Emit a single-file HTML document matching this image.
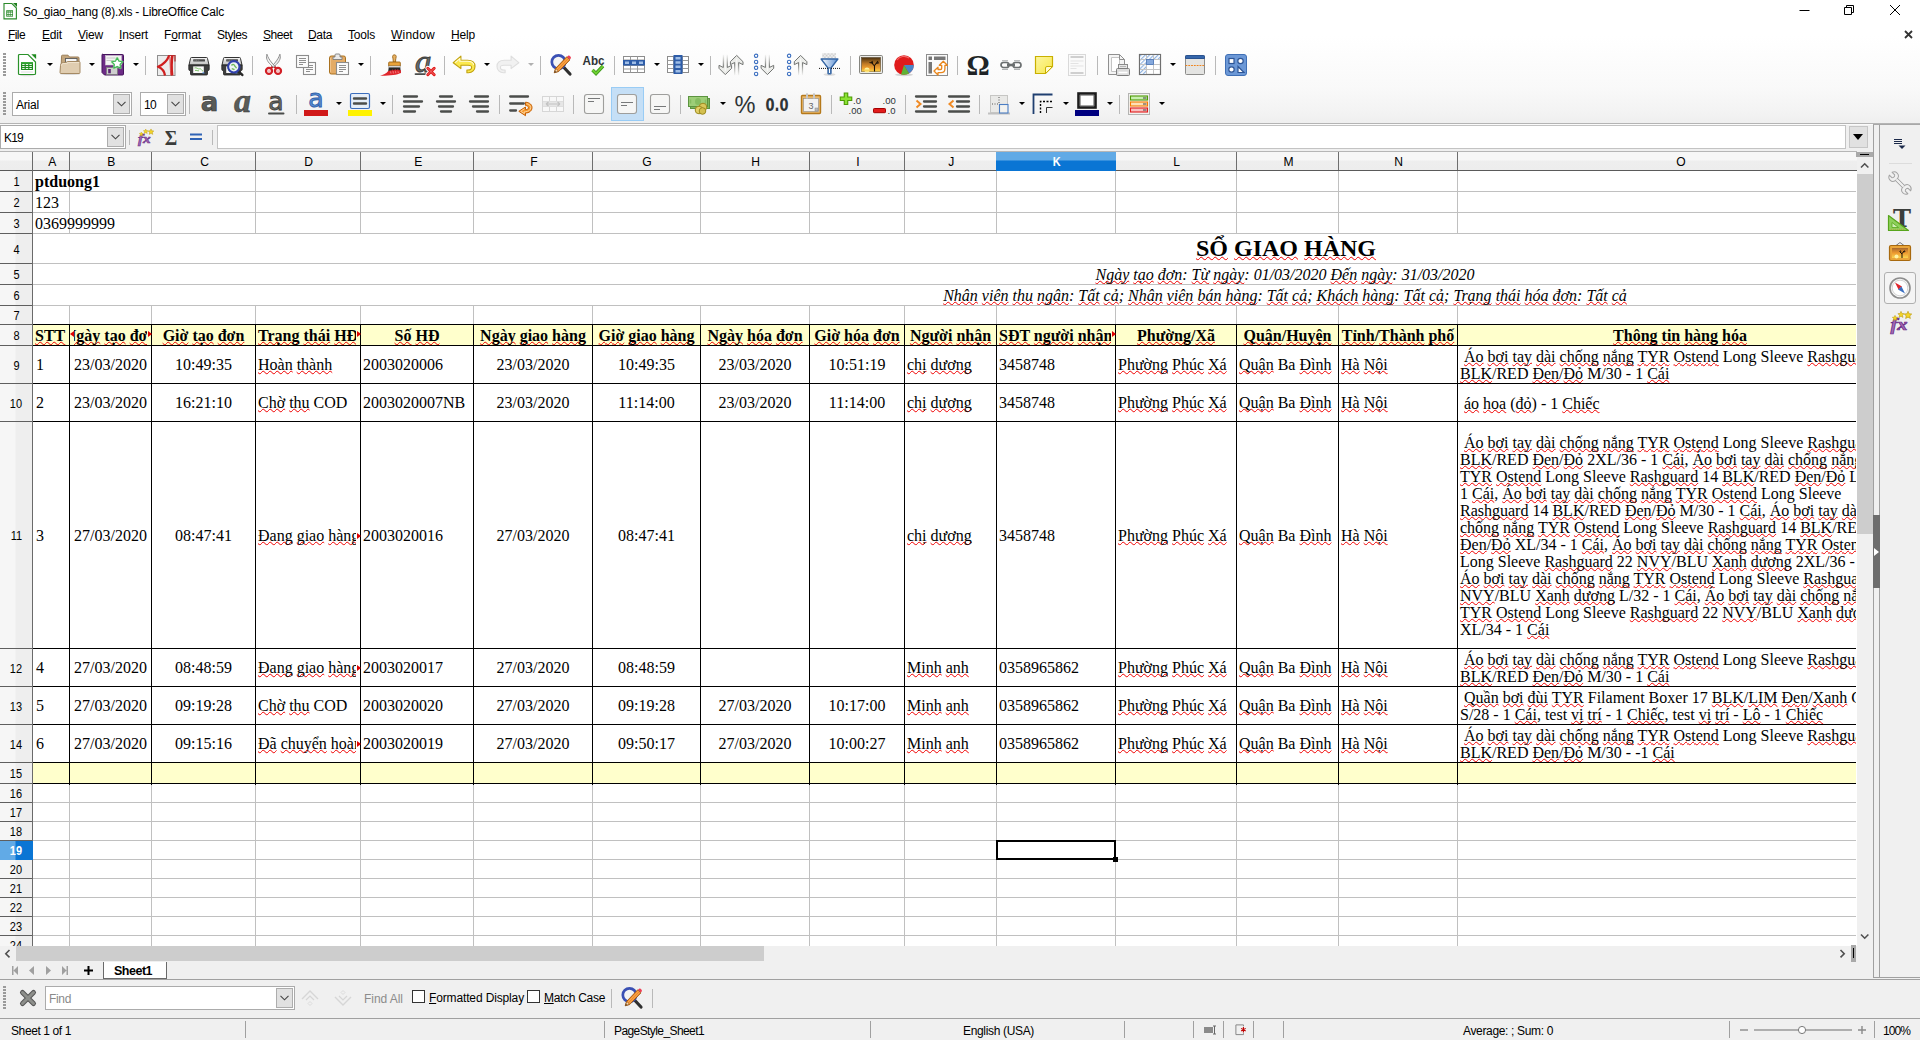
<!DOCTYPE html>
<html lang="vi"><head><meta charset="utf-8"><title>So_giao_hang (8).xls - LibreOffice Calc</title>
<style>
html,body{margin:0;padding:0;}
body{width:1920px;height:1040px;overflow:hidden;background:#f0f0f0;position:relative;font-family:"Liberation Sans", sans-serif;font-size:12px;color:#000;}
div,span{box-sizing:border-box;}
.abs{position:absolute;}
.t{position:absolute;white-space:pre;line-height:16px;height:16px;}
.ic{position:absolute;width:24px;height:24px;overflow:visible;}
.dd{position:absolute;width:0;height:0;border-left:3px solid transparent;border-right:3px solid transparent;border-top:3.5px solid #000;}
.sep{position:absolute;width:1px;height:19px;background:#b9b9b9;}
.cell{position:absolute;font-family:"Liberation Serif", serif;font-size:16px;white-space:pre;overflow:hidden;display:flex;align-items:center;line-height:17px;}
.cell.c{justify-content:center;}
.cell.b{font-weight:bold;}
.cell.i{font-style:italic;}
.sp{text-decoration:underline wavy #f00000;text-decoration-thickness:1px;text-underline-offset:0.2px;text-decoration-skip-ink:none;}
.hl{position:absolute;background:#000;}
.gl{position:absolute;background:#c0c0c0;}
.ch{position:absolute;top:152px;height:18px;text-align:center;font-size:13px;line-height:20px;color:#000;padding-left:2px;}
.rh{position:absolute;left:0;width:32px;text-align:center;font-size:12.5px;color:#000;}
.st{position:absolute;top:1021px;height:18px;line-height:18px;white-space:pre;}
.ssep{position:absolute;top:1021px;width:1px;height:17px;background:#a0a0a0;}
.tri{position:absolute;width:0;height:0;border-top:3px solid transparent;border-bottom:3px solid transparent;}
</style></head><body>
<div class="abs" style="left:0;top:0;width:1920px;height:24px;background:#fff"></div>
<svg class="ic" style="left:1px;top:1.5px;width:18px;height:18px" viewBox="0 0 24 24"><path d="M4 2h10.500l6 6v14.500h-16.500z" fill="#fff" stroke="#2b8a2b" stroke-width="1.500"/><path d="M16 1.300h5.300v5.300z" fill="#1e7e1e"/><rect x="7" y="11" width="9" height="8.500" fill="#2b8a2b"/><path d="M8.300 12.500h1.800v1.400h-1.800zM10.800 12.500h1.800v1.400h-1.800zM13.300 12.500h1.800v1.400h-1.800zM8.300 14.700h1.800v1.400h-1.800zM10.800 14.700h1.800v1.400h-1.800zM13.300 14.700h1.800v1.400h-1.800zM8.300 16.900h1.800v1.400h-1.800zM10.800 16.900h1.800v1.400h-1.800zM13.300 16.900h1.800v1.400h-1.800z" fill="#fff"/></svg><span class="t" style="left:23px;top:4px;font-size:12px;color:#000;letter-spacing:-0.211px;">So_giao_hang (8).xls - LibreOffice Calc</span>
<svg class="abs" style="left:1780px;top:0" width="140" height="24" viewBox="0 0 140 24" fill="none" stroke="#000" stroke-width="1"><path d="M19.5 10.5h10"/><path d="M64.5 7.5h7v7h-7z M66.5 7.5v-2h7v7h-2"/><path d="M110 5l10 10M120 5l-10 10"/></svg>
<div class="abs" style="left:0;top:24px;width:1920px;height:99px;background:linear-gradient(#ffffff 0px,#ffffff 12px,#fcfcfc 40px,#f9f9f9 64px,#f3f3f3 88px,#efefef 99px)"></div>
<div class="abs" style="left:0;top:123px;width:1920px;height:1px;background:#b4b4b4"></div>
<div class="abs" style="left:0;top:124px;width:1920px;height:1px;background:#fbfbfb"></div>
<span class="t" style="left:8px;top:27px;font-size:12px;color:#000;letter-spacing:-0.586px;"><u>F</u>ile</span>
<span class="t" style="left:42px;top:27px;font-size:12px;color:#000;letter-spacing:-0.172px;"><u>E</u>dit</span>
<span class="t" style="left:78px;top:27px;font-size:12px;color:#000;letter-spacing:-0.199px;"><u>V</u>iew</span>
<span class="t" style="left:119px;top:27px;font-size:12px;color:#000;letter-spacing:-0.169px;"><u>I</u>nsert</span>
<span class="t" style="left:164px;top:27px;font-size:12px;color:#000;letter-spacing:-0.169px;">F<u>o</u>rmat</span>
<span class="t" style="left:217px;top:27px;font-size:12px;color:#000;letter-spacing:-0.448px;">Sty<u>l</u>es</span>
<span class="t" style="left:263px;top:27px;font-size:12px;color:#000;letter-spacing:-0.472px;"><u>S</u>heet</span>
<span class="t" style="left:308px;top:27px;font-size:12px;color:#000;letter-spacing:-0.340px;"><u>D</u>ata</span>
<span class="t" style="left:348px;top:27px;font-size:12px;color:#000;letter-spacing:-0.203px;"><u>T</u>ools</span>
<span class="t" style="left:391px;top:27px;font-size:12px;color:#000;letter-spacing:0.219px;"><u>W</u>indow</span>
<span class="t" style="left:451px;top:27px;font-size:12px;color:#000;letter-spacing:-0.172px;"><u>H</u>elp</span>
<svg class="abs" style="left:1902.5px;top:28.5px" width="12" height="12" viewBox="0 0 12 12"><path d="M2 2l7 7M9 2l-7 7" stroke="#333" stroke-width="1.8" fill="none"/></svg>
<div class="abs" style="left:3px;top:53px;width:3px;height:23px;background:repeating-linear-gradient(#9a9a9a 0,#9a9a9a 2px,transparent 2px,transparent 3px)"></div>
<div class="abs" style="left:3px;top:92px;width:3px;height:23px;background:repeating-linear-gradient(#9a9a9a 0,#9a9a9a 2px,transparent 2px,transparent 3px)"></div>
<div class="abs" style="left:3px;top:986px;width:3px;height:23px;background:repeating-linear-gradient(#9a9a9a 0,#9a9a9a 2px,transparent 2px,transparent 3px)"></div>
<svg class="ic" style="left:14px;top:53px;" viewBox="0 0 24 24"><ellipse cx="13" cy="22.300" rx="7" ry="1" fill="#000" opacity=".12"/><path d="M5.500 1.500h8.500l7.500 7.500v11.500a1 1 0 0 1-1 1h-15a1 1 0 0 1-1-1v-18a1 1 0 0 1 1-1z" fill="#fff" stroke="#2a922a" stroke-width="1.200"/><path d="M17.300 1.200h4.800v4.800z" fill="#1e8a1e"/><rect x="7" y="9" width="12" height="8" rx=".6" fill="#1f8c1f"/><path d="M7 9h12v1.600h-12z" fill="#3cab3c"/><path d="M8.200 11h2.400v1h-2.400zM11.800 11h2.400v1h-2.400zM15.400 11h2.400v1h-2.400zM8.200 13h2.400v1h-2.400zM11.800 13h2.400v1h-2.400zM15.400 13h2.400v1h-2.400zM8.200 15h2.400v1h-2.400zM11.800 15h2.400v1h-2.400zM15.400 15h2.400v1h-2.400z" fill="#e8f6e8"/><path d="M7 19h12" stroke="#d5d5d5" stroke-width=".8"/></svg>
<div class="dd" style="left:46.5px;top:62.5px;border-top-color:#000"></div>
<svg class="ic" style="left:58px;top:53px;" viewBox="0 0 24 24"><ellipse cx="12" cy="21" rx="10" ry="1" fill="#000" opacity=".12"/><path d="M3.500 3.200a1 1 0 0 1 1-1h5.500l1.500 1.800h8.500a1 1 0 0 1 1 1v14h-18z" fill="#c2a57c" stroke="#9a7d56"/><rect x="7.500" y="5.500" width="11.500" height="6" fill="#f6f6f6" stroke="#5a5a5a" stroke-width=".9"/><path d="M8.500 8.500h9.500v2.500h-9.500z" fill="#d0d0d0"/><path d="M2.500 12.500c0-2 1.500-3 3-3h2.500l1.500-1h11.500a1 1 0 0 1 1 1v10a1 1 0 0 1-1 1h-18a1 1 0 0 1-1-1z" fill="#e0cdb0" stroke="#a58a64"/><path d="M3.500 12.500c0-1.200 1-2 2.200-2h3l1.500-1h11" fill="none" stroke="#f0e4cf" stroke-width=".9"/></svg>
<div class="dd" style="left:88.5px;top:62.5px;border-top-color:#000"></div>
<svg class="ic" style="left:101px;top:53px;" viewBox="0 0 24 24"><path d="M2 1.500h19.500a1 1 0 0 1 1 1v18.500a1 1 0 0 1-1 1h-18l-2.500-2.500v-17.500a1 1 0 0 1 1-1z" fill="#6c2b86" stroke="#45145c"/><rect x="4.500" y="2.500" width="16" height="9.500" fill="#f3f3f3" stroke="#d0d0d0" stroke-width=".5"/><path d="M5.500 5h9M5.500 7.500h7" stroke="#c4c4c4" stroke-width=".9"/><rect x="5.500" y="14.500" width="11" height="7" fill="#cfcfcf" stroke="#7a7a7a" stroke-width=".8"/><rect x="7.200" y="16" width="2.600" height="4.300" fill="#5a2273"/><path d="M16.200 5l1.700 3.200 3.600.600-2.500 2.600.5 3.600-3.300-1.600-3.300 1.600.5-3.600-2.500-2.600 3.600-.600z" fill="#fff" stroke="#8fe08a" stroke-width="2.300" stroke-linejoin="round" opacity=".8"/><path d="M16.200 5l1.700 3.200 3.600.600-2.500 2.600.5 3.600-3.300-1.600-3.300 1.600.5-3.600-2.500-2.600 3.600-.600z" fill="#fff" stroke="#3fb558" stroke-width="1.100" stroke-linejoin="round"/></svg>
<div class="dd" style="left:132.5px;top:62.5px;border-top-color:#000"></div>
<div class="sep" style="left:145px;top:56px"></div>
<svg class="ic" style="left:154px;top:53px;" viewBox="0 0 24 24"><rect x="3.500" y="2.500" width="17.500" height="20" fill="#ededed" stroke="#8f8f8f"/><path d="M14 2.500h7v6" fill="none" stroke="#b03030" stroke-width="1.200"/><path d="M15 2.800c-1.500 4-5.500 8.500-11 11 4.500 1.800 6.500 5 7 8.700" fill="none" stroke="#cf1f1f" stroke-width="2.300" stroke-linejoin="round"/><path d="M18.300 2.800c-.8 5-.9 13-.2 19.700" fill="none" stroke="#cf1f1f" stroke-width="2.600"/><path d="M15.800 4c.3 5 .4 12 1 18" fill="none" stroke="#d84a4a" stroke-width=".9"/></svg>
<svg class="ic" style="left:187px;top:53px;" viewBox="0 0 24 24"><defs><linearGradient id="pg" x1="0" y1="0" x2="0" y2="1"><stop offset="0" stop-color="#f6f6f6"/><stop offset="1" stop-color="#bdbdbd"/></linearGradient></defs><path d="M4.500 4.500h15a1 1 0 0 1 1 1l1.500 6.500h-20l1.500-6.500a1 1 0 0 1 1-1z" fill="url(#pg)" stroke="#333" stroke-width="1"/><rect x="6.200" y="6.300" width="11.800" height="2.100" rx=".5" fill="#4a4a4a"/><path d="M7.500 7.300h5" stroke="#9a9a9a" stroke-width=".7" stroke-dasharray="1 .6"/><path d="M1.800 12h20.400v4.500a1 1 0 0 1-1 1h-.7v3.500a1 1 0 0 1-1 1h-15a1 1 0 0 1-1-1v-3.500h-.7a1 1 0 0 1-1-1z" fill="#3e3e3e" stroke="#222" stroke-width=".8"/><rect x="6.200" y="13.400" width="10.600" height="6.600" fill="#fafafa"/><path d="M7.500 15c2-1 3.500 1.500 5 .8s2 1.800 3.500 2.400M8 17.500c1.500-.6 2.500.6 4 .3" fill="none" stroke="#7fc46a" stroke-width="1"/><rect x="15.400" y="19.400" width="2" height="1" fill="#4a90e2"/></svg>
<svg class="ic" style="left:220px;top:53px;" viewBox="0 0 24 24"><defs><linearGradient id="pg" x1="0" y1="0" x2="0" y2="1"><stop offset="0" stop-color="#f6f6f6"/><stop offset="1" stop-color="#bdbdbd"/></linearGradient></defs><path d="M4.500 4.500h15a1 1 0 0 1 1 1l1.500 6.500h-20l1.500-6.500a1 1 0 0 1 1-1z" fill="url(#pg)" stroke="#333" stroke-width="1"/><rect x="6.200" y="6.300" width="11.800" height="2.100" rx=".5" fill="#4a4a4a"/><path d="M7.500 7.300h5" stroke="#9a9a9a" stroke-width=".7" stroke-dasharray="1 .6"/><path d="M1.800 12h20.400v4.500a1 1 0 0 1-1 1h-.7v3.500a1 1 0 0 1-1 1h-15a1 1 0 0 1-1-1v-3.500h-.7a1 1 0 0 1-1-1z" fill="#3e3e3e" stroke="#222" stroke-width=".8"/><rect x="6.200" y="13.400" width="10.600" height="6.600" fill="#fafafa"/><path d="M7.500 15c2-1 3.500 1.500 5 .8s2 1.800 3.500 2.400M8 17.500c1.500-.6 2.500.6 4 .3" fill="none" stroke="#7fc46a" stroke-width="1"/><rect x="15.400" y="19.400" width="2" height="1" fill="#4a90e2"/><path d="M18.700 18.700l3.600 3.200" stroke="#2a2a2a" stroke-width="2.600" stroke-linecap="round"/><circle cx="13.800" cy="13.800" r="5.700" fill="#eef3f6" stroke="#3040ac" stroke-width="2.100"/><path d="M11.500 12.500c1-1.500 2.500-1.500 3 0s1.800 1.200 1.800 2.800M11.800 15.500c1 .8 2 .5 2.600 1.200" fill="none" stroke="#6fb85a" stroke-width="1.400"/></svg>
<div class="sep" style="left:252px;top:56px"></div>
<svg class="ic" style="left:261px;top:53px;" viewBox="0 0 24 24"><path d="M10 15.300l2.500-2.600 2.500 2.600" fill="none" stroke="#c81a20" stroke-width="2"/><circle cx="8" cy="17.900" r="3" fill="#fff" stroke="#d21f26" stroke-width="2.300"/><circle cx="17" cy="17.900" r="3" fill="#fff" stroke="#d21f26" stroke-width="2.300"/><circle cx="8" cy="17.900" r="1" fill="#fff" stroke="#e58a8a" stroke-width=".6"/><circle cx="17" cy="17.900" r="1" fill="#fff" stroke="#e58a8a" stroke-width=".6"/><path d="M18.900 1.200C20 4.500 19 8 15.300 11.500L12.600 14.200L11.200 13L13.800 10C16.300 7 17.800 4.500 18.900 1.200Z" fill="#ededed" stroke="#858585" stroke-width=".9" stroke-linejoin="round"/><path d="M5.900 1.200C4.800 4.500 5.800 8 9.500 11.500L12.200 14.200L13.600 13L11 10C8.500 7 7 4.500 5.900 1.200Z" fill="#f4f4f4" stroke="#858585" stroke-width=".9" stroke-linejoin="round"/></svg>
<svg class="ic" style="left:294px;top:53px;" viewBox="0 0 24 24"><rect x="9.500" y="9.500" width="12" height="12" fill="#fbfbfb" stroke="#8c8c8c" stroke-width="1.100"/><path d="M12 12.500h7M12 14.500h7M12 16.500h7M12 18.500h4" stroke="#8e8e8e" stroke-width="1.100"/><rect x="2.500" y="2.500" width="12" height="12" fill="#fbfbfb" stroke="#8c8c8c" stroke-width="1.100"/><path d="M5 5.500h7M5 7.500h7M5 9.500h7M5 11.500h4" stroke="#8e8e8e" stroke-width="1.100"/></svg>
<svg class="ic" style="left:326px;top:53px;" viewBox="0 0 24 24"><rect x="3.500" y="3" width="16" height="18" rx="1.800" fill="#e3ab66" stroke="#a9711f"/><path d="M4.500 5v14" stroke="#efc48d" stroke-width="1"/><path d="M7 6.500v-2.500h2v-2a1 1 0 0 1 1-1h3a1 1 0 0 1 1 1v2h2v2.500z" fill="#e9e9e9" stroke="#7d7d7d" stroke-width=".9"/><rect x="10.500" y="9.500" width="12" height="12" fill="#fbfbfb" stroke="#8c8c8c" stroke-width="1.100"/><path d="M13 12.500h7M13 14.500h7M13 16.500h7M13 18.500h4" stroke="#8e8e8e" stroke-width="1.100"/></svg>
<div class="dd" style="left:357.5px;top:62.5px;border-top-color:#000"></div>
<div class="sep" style="left:370px;top:56px"></div>
<svg class="ic" style="left:379px;top:53px;" viewBox="0 0 24 24"><path d="M13.600 3.500c0-2.200 3.600-2.200 3.600 0 0 1.500-.6 2-.6 3.500v2h-2.400v-2c0-1.500-.6-2-.6-3.500z" fill="#e8b264" stroke="#9a6417" stroke-width=".9"/><path d="M10.500 9h10a.8.800 0 0 1 .8.800v3.200h-11.600v-3.200a.8.800 0 0 1 .8-.800z" fill="#e9a23a" stroke="#9a6417" stroke-width=".9"/><path d="M9.700 13h11.600v1.400h-11.600z" fill="#f2f2f2" stroke="#888" stroke-width=".5"/><path d="M9.700 14.400h11.600l.5 5.400h-12.800z" fill="#262626"/><path d="M9.200 18c1 .5 1.500-1.500 2.500-.5s1.500-2 2.500-.5 1.800-1.800 2.600-.3 1.800-1.500 2.600 0 1.500-.5 2.400.6l.2 2.700c-4 1.800-12 3-21 2.800 3-1.200 6.500-2.300 8.200-4.800z" fill="#e0262c"/><path d="M11.500 18.500l.5 2M14 18l.4 2.500M16.500 18.200l.3 2M19 18.300l.3 1.800" stroke="#f7a0a0" stroke-width=".7"/></svg>
<svg class="ic" style="left:413px;top:53px;" viewBox="0 0 24 24"><text x="2" y="19" font-family="Liberation Serif, serif" font-style="italic" font-size="31" fill="#6a6c68" stroke="#3e403e" stroke-width=".9" textLength="16.500" lengthAdjust="spacingAndGlyphs">a</text><path d="M2.500 21.100h10.500" stroke="#4a4c4a" stroke-width="1.800" stroke-linecap="round"/><path d="M14.800 15.300l6.400 6.400M21.200 15.300l-6.400 6.400" stroke="#fff" stroke-width="4.800" stroke-linecap="round"/><path d="M14.800 15.300l6.400 6.400M21.200 15.300l-6.400 6.400" stroke="#e01b1b" stroke-width="3" stroke-linecap="round"/><path d="M14.800 15.300l6.400 6.400M21.200 15.300l-6.400 6.400" stroke="#f58080" stroke-width=".8" stroke-linecap="round"/></svg>
<div class="sep" style="left:444px;top:56px"></div>
<svg class="ic" style="left:452px;top:53px;" viewBox="0 0 24 24"><path d="M1.200 9.700L8.900 3.100V7.200H15.500C20.300 7.200 23 9.800 23 13.400C23 17 20.300 19.700 16.500 19.700H14.900V17H16C18.300 17 19.600 15.600 19.600 14.200C19.600 12.900 18.300 12.200 16 12.200H8.900V15.600Z" fill="#fbe94e" stroke="#c0a10e" stroke-width="1.100" stroke-linejoin="round"/><path d="M3.200 9.700l4.600-4v2.600h8c3 0 5.300 1.200 6 3.600" fill="none" stroke="#fffbd8" stroke-width="1.100"/></svg>
<div class="dd" style="left:483.5px;top:62.5px;border-top-color:#000"></div>
<svg class="ic" style="left:496px;top:53px;" viewBox="0 0 24 24"><g transform="translate(24 0) scale(-1 1)"><path d="M1.200 9.700L8.900 3.100V7.200H15.500C20.300 7.200 23 9.800 23 13.400C23 17 20.300 19.700 16.500 19.700H14.900V17H16C18.300 17 19.600 15.600 19.600 14.200C19.600 12.900 18.300 12.200 16 12.200H8.900V15.600Z" fill="#f1f1f1" stroke="#dedede" stroke-width="1.100" stroke-linejoin="round"/></g></svg>
<div class="dd" style="left:527.5px;top:62.5px;border-top-color:#b0b0b0"></div>
<div class="sep" style="left:540px;top:56px"></div>
<svg class="ic" style="left:549px;top:53px;" viewBox="0 0 24 24"><path d="M14 13.500l7 7.500" stroke="#2f2f2f" stroke-width="3.200" stroke-linecap="round"/><circle cx="9.500" cy="9" r="6.700" fill="#f3f3f3" fill-opacity=".9" stroke="#3a50b4" stroke-width="2.700"/><path d="M5.200 19.800l1.300-4.300 11.200-11.700 3.200 3.100-11.300 11.700z" fill="#f28b24" stroke="#8f4a08" stroke-width=".8"/><path d="M7.500 16.500l11-11.500M8.800 17.800l11-11.500" stroke="#f9b870" stroke-width=".7"/><path d="M5.500 19.500l1.300-4 2.700 2.700z" fill="#f3d9b0" stroke="#8f4a08" stroke-width=".6"/><path d="M18 3.800l1.200-1.100c.9-.8 3.400 1.600 2.600 2.600l-1.100 1.200z" fill="#ee3e54"/><path d="M5.500 19.500l.5-1.500 1 1z" fill="#222"/></svg>
<svg class="ic" style="left:582px;top:53px;" viewBox="0 0 24 24"><text x="0.500" y="11.500" font-family="Liberation Sans, sans-serif" font-weight="bold" font-size="12.500" fill="#2e3436" textLength="22" lengthAdjust="spacingAndGlyphs">Abc</text><path d="M10.500 17l3.500 3.500 7-7.500" fill="none" stroke="#3f9a1c" stroke-width="3.400"/><path d="M10.500 17l3.500 3.500 7-7.500" fill="none" stroke="#6fd032" stroke-width="1.800"/></svg>
<div class="sep" style="left:614px;top:56px"></div>
<svg class="ic" style="left:622px;top:53px;" viewBox="0 0 24 24"><rect x="1.500" y="3.500" width="21" height="16" fill="#fff" stroke="#8d8d8d"/><path d="M1.500 7h21M1.500 12.500h21M1.500 16h21M8.500 3.500v16M15.500 3.500v16" stroke="#9a9a9a"/><rect x="1" y="7" width="22" height="5.500" fill="#2d5ca8"/><path d="M3 8.500h4v2.500h-4zM10 8.500h4v2.500h-4zM17 8.500h4v2.500h-4z" fill="#9fbde6"/></svg>
<div class="dd" style="left:653.5px;top:62.5px;border-top-color:#000"></div>
<svg class="ic" style="left:666px;top:53px;" viewBox="0 0 24 24"><rect x="1.500" y="3.500" width="21" height="16" fill="#fff" stroke="#8d8d8d"/><path d="M1.500 7.500h21M1.500 11.500h21M1.500 15.500h21M7.500 3.500v16M16.500 3.500v16" stroke="#9a9a9a"/><rect x="7.500" y="2" width="9" height="19" fill="#2d5ca8"/><path d="M9.500 4h5v2.500h-5zM9.500 8.300h5v2.500h-5zM9.500 12.600h5v2.500h-5zM9.500 16.900h5v2.500h-5z" fill="#9fbde6"/></svg>
<div class="dd" style="left:697.5px;top:62.5px;border-top-color:#000"></div>
<div class="sep" style="left:710px;top:56px"></div>
<svg class="ic" style="left:719px;top:53px;" viewBox="0 0 24 24"><defs><linearGradient id="agf" gradientUnits="userSpaceOnUse" x1="0" y1="1" x2="0" y2="12"><stop offset="0" stop-color="#eeeeec" stop-opacity="0"/><stop offset="1" stop-color="#ecedea"/></linearGradient><linearGradient id="ags" gradientUnits="userSpaceOnUse" x1="0" y1="1" x2="0" y2="13"><stop offset="0" stop-color="#888a85" stop-opacity="0"/><stop offset="1" stop-color="#707270"/></linearGradient></defs><g><path d="M4.3 1.500V14.500L0.0 12.300V15.300L6.3 21.600L12.6 15.300V12.300L8.3 14.500V1.500Z" fill="url(#agf)"/><path d="M4.3 1.500V14.500L0.0 12.300V15.300L6.3 21.600L12.6 15.300V12.300L8.3 14.500V1.500" fill="none" stroke="url(#ags)" stroke-width="1" stroke-linejoin="round"/><path d="M6.3 3V18" stroke="#fff" stroke-opacity=".7" stroke-width="1"/></g><g transform="rotate(180 17.7 12)"><path d="M15.7 1.500V14.500L11.399999999999999 12.300V15.300L17.7 21.600L24.0 15.300V12.300L19.7 14.500V1.500Z" fill="url(#agf)"/><path d="M15.7 1.500V14.500L11.399999999999999 12.300V15.300L17.7 21.600L24.0 15.300V12.300L19.7 14.500V1.500" fill="none" stroke="url(#ags)" stroke-width="1" stroke-linejoin="round"/><path d="M17.7 3V18" stroke="#fff" stroke-opacity=".7" stroke-width="1"/></g></svg>
<svg class="ic" style="left:752px;top:53px;" viewBox="0 0 24 24"><defs><linearGradient id="agf" gradientUnits="userSpaceOnUse" x1="0" y1="1" x2="0" y2="12"><stop offset="0" stop-color="#eeeeec" stop-opacity="0"/><stop offset="1" stop-color="#ecedea"/></linearGradient><linearGradient id="ags" gradientUnits="userSpaceOnUse" x1="0" y1="1" x2="0" y2="13"><stop offset="0" stop-color="#888a85" stop-opacity="0"/><stop offset="1" stop-color="#707270"/></linearGradient></defs><circle cx="4.100" cy="2.8" r="1.700" fill="#fff" stroke="#3b6fc0" stroke-width="1.100"/><circle cx="4.100" cy="8.9" r="1.700" fill="#fff" stroke="#3b6fc0" stroke-width="1.100"/><circle cx="4.100" cy="14.8" r="1.700" fill="#fff" stroke="#3b6fc0" stroke-width="1.100"/><circle cx="4.100" cy="20.9" r="1.700" fill="#fff" stroke="#3b6fc0" stroke-width="1.100"/><g><path d="M13.4 1.500V14.500L9.100000000000001 12.300V15.300L15.4 21.600L21.7 15.300V12.300L17.4 14.500V1.500Z" fill="url(#agf)"/><path d="M13.4 1.500V14.500L9.100000000000001 12.300V15.300L15.4 21.600L21.7 15.300V12.300L17.4 14.500V1.500" fill="none" stroke="url(#ags)" stroke-width="1" stroke-linejoin="round"/><path d="M15.4 3V18" stroke="#fff" stroke-opacity=".7" stroke-width="1"/></g></svg>
<svg class="ic" style="left:785px;top:53px;" viewBox="0 0 24 24"><defs><linearGradient id="agf" gradientUnits="userSpaceOnUse" x1="0" y1="1" x2="0" y2="12"><stop offset="0" stop-color="#eeeeec" stop-opacity="0"/><stop offset="1" stop-color="#ecedea"/></linearGradient><linearGradient id="ags" gradientUnits="userSpaceOnUse" x1="0" y1="1" x2="0" y2="13"><stop offset="0" stop-color="#888a85" stop-opacity="0"/><stop offset="1" stop-color="#707270"/></linearGradient></defs><circle cx="4.100" cy="2.8" r="1.700" fill="#fff" stroke="#3b6fc0" stroke-width="1.100"/><circle cx="4.100" cy="8.9" r="1.700" fill="#fff" stroke="#3b6fc0" stroke-width="1.100"/><circle cx="4.100" cy="14.8" r="1.700" fill="#fff" stroke="#3b6fc0" stroke-width="1.100"/><circle cx="4.100" cy="20.9" r="1.700" fill="#fff" stroke="#3b6fc0" stroke-width="1.100"/><g transform="rotate(180 15.6 12)"><path d="M13.6 1.500V14.500L9.3 12.300V15.300L15.6 21.600L21.9 15.300V12.300L17.6 14.500V1.500Z" fill="url(#agf)"/><path d="M13.6 1.500V14.500L9.3 12.300V15.300L15.6 21.600L21.9 15.300V12.300L17.6 14.500V1.500" fill="none" stroke="url(#ags)" stroke-width="1" stroke-linejoin="round"/><path d="M15.6 3V18" stroke="#fff" stroke-opacity=".7" stroke-width="1"/></g></svg>
<svg class="ic" style="left:817px;top:53px;" viewBox="0 0 24 24"><defs><linearGradient id="fg" x1="0" y1="0" x2="1" y2="0"><stop offset="0" stop-color="#fff"/><stop offset="1" stop-color="#5b8fd2"/></linearGradient><pattern id="ck" width="1.400" height="1.400" patternUnits="userSpaceOnUse"><rect width=".7" height=".7" fill="#c4c4c4"/><rect x=".7" y=".7" width=".7" height=".7" fill="#c4c4c4"/></pattern></defs><rect x="5.200" y="0.200" width="13.800" height="5.400" fill="url(#ck)"/><ellipse cx="12.500" cy="21.500" rx="6" ry="1.300" fill="#000" opacity=".12"/><path d="M4.100 6h16.800l-6.900 9v5.200a.7.700 0 0 1-.7.700h-1.600a.7.700 0 0 1-.7-.7v-5.200z" fill="url(#fg)" stroke="#3465a4" stroke-width="1.300" stroke-linejoin="round"/><path d="M2 15.400h21" stroke="#111" stroke-width="1" stroke-dasharray="1 1"/><path d="M11.400 15h2.200v5.500h-2.200z" fill="#fff" stroke="#3465a4" stroke-width="1"/></svg>
<div class="sep" style="left:850px;top:56px"></div>
<svg class="ic" style="left:859px;top:53px;" viewBox="0 0 24 24"><defs><linearGradient id="ig" x1="0" y1="0" x2="0" y2="1"><stop offset="0" stop-color="#4a3212"/><stop offset=".45" stop-color="#c07a26"/><stop offset=".75" stop-color="#f0a030"/><stop offset="1" stop-color="#f8cc48"/></linearGradient></defs><rect x=".5" y="2.500" width="23" height="18" rx="1.200" fill="#ececea" stroke="#85857f"/><rect x="2.500" y="4.500" width="19" height="14" fill="url(#ig)" stroke="#5a4a30" stroke-width=".6"/><circle cx="8" cy="17" r="2.600" fill="#fff3a0"/><path d="M2.800 16.500h18.400v2h-18.400z" fill="#f6c640" opacity=".7"/><path d="M15.500 18.500v-6.500M15.500 13l-3.500-4M15.500 12.500l3.500-4.500M13.800 11l-.8-3M17 10.500l3-.800M12.800 10l-2.300-.500" stroke="#1c1208" stroke-width="1.100" fill="none"/></svg>
<svg class="ic" style="left:892px;top:53px;" viewBox="0 0 24 24"><ellipse cx="12" cy="21.800" rx="9" ry="1.500" fill="#000" opacity=".15"/><circle cx="12" cy="12" r="9.800" fill="#e01b1b"/><path d="M12 12h9.800a9.800 9.800 0 0 1-4.800 8.400z" fill="#4a86c8"/><path d="M12 12l5 8.400a9.800 9.800 0 0 1-8 1z" fill="#5fb336"/><path d="M5 7a8.500 8.500 0 0 1 12-2" stroke="#f36a6a" stroke-width="1.200" fill="none"/></svg>
<svg class="ic" style="left:925px;top:53px;" viewBox="0 0 24 24"><rect x="1.500" y="1.500" width="21" height="21" fill="#fafafa" stroke="#8d8d8d"/><rect x="3.500" y="3.500" width="3.500" height="3.500" fill="#777"/><rect x="9" y="3.500" width="11.500" height="3.500" fill="#777"/><rect x="3.500" y="9" width="3.500" height="11.500" fill="#777"/><path transform="translate(0 -1)" d="M9 19l4-3.800v2.300h2.500c.8 0 1.200-.4 1.200-1.200v-3h-2.400l4-4 4 4h-2.400v3.500c0 2.500-1.400 3.900-3.900 3.900h-3v2.300z" fill="#fff" stroke="#e9861c" stroke-width="1.300" stroke-linejoin="round"/></svg>
<div class="sep" style="left:957px;top:56px"></div>
<svg class="ic" style="left:966px;top:53px;" viewBox="0 0 24 24"><text x="12" y="21.500" text-anchor="middle" font-family="Liberation Serif, serif" font-weight="bold" font-size="29" fill="#202426">Ω</text></svg>
<svg class="ic" style="left:999px;top:53px;" viewBox="0 0 24 24"><g fill="none" stroke="#6b6f70" stroke-width="1.700"><rect x="2" y="9.500" width="8" height="5" rx="2.500"/><rect x="14" y="9.500" width="8" height="5" rx="2.500"/><path d="M8 12h8" stroke-width="2.600"/></g><path d="M3 7.800h6M15 7.800h6M3 16.300h6M15 16.300h6" stroke="#9ea2a3" stroke-width="1"/></svg>
<svg class="ic" style="left:1032px;top:53px;" viewBox="0 0 24 24"><defs><linearGradient id="ng" x1="0" y1="0" x2="1" y2="1"><stop offset="0" stop-color="#fdf6a0"/><stop offset="1" stop-color="#f6e64c"/></linearGradient></defs><path d="M3.500 3.500h17v10l-7 7h-10z" fill="url(#ng)" stroke="#c9b000" stroke-width="1.200"/><path d="M20.500 13.500l-7 7v-5.500a1.500 1.500 0 0 1 1.500-1.500z" fill="#fffbd0" stroke="#c9b000" stroke-width="1"/></svg>
<svg class="ic" style="left:1065px;top:53px;" viewBox="0 0 24 24"><rect x="3.500" y="1.500" width="17" height="21" fill="#fafafa" stroke="#d9d9d9"/><path d="M5.500 4h13M5.500 20h13" stroke="#cfcfcf" stroke-width="2"/><path d="M5.500 8h13M5.500 10.500h8M5.500 13h13M5.500 15.500h6" stroke="#e3e3e3"/></svg>
<div class="sep" style="left:1097px;top:56px"></div>
<svg class="ic" style="left:1106px;top:53px;" viewBox="0 0 24 24"><path d="M2.500 1.500h11l5 5v15h-16z" fill="#f4f4f4" stroke="#8f8f8f"/><path d="M5.500 4.500h8v14h-8z" fill="#fff" stroke="#c4c4c4"/><path d="M13.500 1.500v5h5" fill="none" stroke="#8f8f8f"/><rect x="12.500" y="11.500" width="9" height="5" fill="#e6e6e6" stroke="#8a8a8a"/><rect x="10.500" y="15.500" width="13" height="7" rx="1" fill="#dcdcdc" stroke="#7d7d7d"/><path d="M12.500 19.500h9" stroke="#fff" stroke-width="1.600"/><path d="M14 13.500h6" stroke="#b4b4b4"/></svg>
<svg class="ic" style="left:1138px;top:53px;" viewBox="0 0 24 24"><defs><pattern id="hz" width="3" height="3" patternUnits="userSpaceOnUse" patternTransform="rotate(-45)"><rect width="3" height="3" fill="#fff"/><rect width="3" height="1.200" fill="#8fb2e0"/></pattern></defs><rect x="1.500" y="1.500" width="21" height="20" fill="#fff" stroke="#6f6f6f" stroke-width="1.200"/><rect x="2" y="2" width="20" height="4.500" fill="url(#hz)"/><rect x="2" y="6.500" width="6.500" height="14.500" fill="url(#hz)"/><path d="M8.500 2v19M15.500 2v19M2 6.500h20M2 11.500h20M2 16.500h20" stroke="#c5c5c5"/><rect x="8.500" y="6.500" width="7" height="5" fill="#86a9dd" stroke="#4a76b8" stroke-width=".8"/></svg>
<div class="dd" style="left:1169.5px;top:62.5px;border-top-color:#000"></div>
<svg class="ic" style="left:1183px;top:53px;" viewBox="0 0 24 24"><rect x="2.500" y="2.500" width="19" height="19" rx="1" fill="#e4e4e2" stroke="#8c8c8a"/><path d="M2.500 3.500a1 1 0 0 1 1-1h17a1 1 0 0 1 1 1v2h-19z" fill="#3566ab" stroke="#2a5390"/><path d="M2.500 12.500h19" stroke="#f0831a" stroke-width="1.200" stroke-dasharray="1.800 1"/></svg>
<div class="sep" style="left:1215px;top:56px"></div>
<svg class="ic" style="left:1224px;top:53px;" viewBox="0 0 24 24"><rect x="1.500" y="1.500" width="21" height="21" rx="2.500" fill="#6c98d6" stroke="#3f6fb5"/><rect x="5" y="5.500" width="5" height="5" fill="#fff" stroke="#2d5596" stroke-width="1.200"/><circle cx="16.500" cy="8" r="2.700" fill="#fff" stroke="#2d5596" stroke-width="1.200"/><circle cx="7.500" cy="16.500" r="2.700" fill="#fff" stroke="#2d5596" stroke-width="1.200"/><path d="M14 19.500v-6l6 6z" fill="#fff" stroke="#2d5596" stroke-width="1.200"/></svg>
<div class="abs" style="left:12px;top:92px;width:120px;height:24px;background:#fff;border:1px solid #ababab"></div>
<div class="abs" style="left:113px;top:94px;width:17px;height:20px;background:#e1e1e1;border:1px solid #adadad"></div>
<svg class="abs" style="left:117px;top:101.0px" width="9" height="6" viewBox="0 0 9 6"><path d="M0.5 0.8l4 4 4-4" stroke="#444" stroke-width="1.1" fill="none"/></svg>
<span class="t" style="left:16px;top:97.0px;font-size:12px;color:#000;letter-spacing:-0.203px;">Arial</span>
<div class="abs" style="left:140px;top:92px;width:46px;height:24px;background:#fff;border:1px solid #ababab"></div>
<div class="abs" style="left:167px;top:94px;width:17px;height:20px;background:#e1e1e1;border:1px solid #adadad"></div>
<svg class="abs" style="left:171px;top:101.0px" width="9" height="6" viewBox="0 0 9 6"><path d="M0.5 0.8l4 4 4-4" stroke="#444" stroke-width="1.1" fill="none"/></svg>
<span class="t" style="left:144px;top:97.0px;font-size:12px;color:#000;letter-spacing:-0.680px;">10</span>
<div class="abs" style="left:611px;top:87px;width:33px;height:34px;background:#c5dff6;border:1px solid #99ccf5"></div>
<div class="sep" style="left:189px;top:95px"></div>
<svg class="ic" style="left:197px;top:92px;" viewBox="0 0 24 24"><text x="12.500" y="19.300" text-anchor="middle" font-family="DejaVu Sans, Liberation Sans, sans-serif" font-weight="bold" font-size="26" fill="#5a5c58" stroke="#2e3030" stroke-width=".6">a</text></svg>
<svg class="ic" style="left:231px;top:92px;" viewBox="0 0 24 24"><text x="3" y="19.500" font-family="Liberation Serif, serif" font-style="italic" font-weight="bold" font-size="34" fill="#5a5c58" stroke="#2e3030" stroke-width=".5" textLength="17" lengthAdjust="spacingAndGlyphs">a</text></svg>
<svg class="ic" style="left:264px;top:92px;" viewBox="0 0 24 24"><text x="12" y="17.700" text-anchor="middle" font-family="DejaVu Sans, Liberation Sans, sans-serif" font-size="25" fill="#6a6c68" stroke="#3a3c3a" stroke-width=".8">a</text><path d="M5 21.500h14.500" stroke="#4a4c4a" stroke-width="2" stroke-linecap="round"/></svg>
<div class="sep" style="left:296px;top:95px"></div>
<svg class="ic" style="left:304px;top:92px;" viewBox="0 0 24 24"><text x="12" y="15.300" text-anchor="middle" font-family="DejaVu Sans, Liberation Sans, sans-serif" font-size="25" fill="#5b8fd6" stroke="#2f5fa8" stroke-width=".9">a</text><rect x="0" y="18" width="24" height="6" fill="#d01818"/></svg>
<div class="dd" style="left:335.5px;top:101.5px;border-top-color:#000"></div>
<svg class="ic" style="left:348px;top:92px;" viewBox="0 0 24 24"><rect x="2.500" y="1.500" width="19" height="15" rx="1.500" fill="#e6eef9" stroke="#3b6dbd" stroke-width="1.200"/><path d="M6 6.500h12M6 11.500h12" stroke="#4b4d4b" stroke-width="2.400" stroke-linecap="round"/><rect x="0" y="18" width="24" height="6" fill="#fff200"/></svg>
<div class="dd" style="left:379.5px;top:101.5px;border-top-color:#000"></div>
<div class="sep" style="left:392px;top:95px"></div>
<svg class="ic" style="left:401px;top:92px;" viewBox="0 0 24 24"><path d="M3 4.5h13" stroke="#4b4d4b" stroke-width="2.300" stroke-linecap="round"/><path d="M3 9.5h18" stroke="#4b4d4b" stroke-width="2.300" stroke-linecap="round"/><path d="M3 14.5h15" stroke="#4b4d4b" stroke-width="2.300" stroke-linecap="round"/><path d="M3 19.5h11" stroke="#4b4d4b" stroke-width="2.300" stroke-linecap="round"/></svg>
<svg class="ic" style="left:434px;top:92px;" viewBox="0 0 24 24"><path d="M6 4.5h12" stroke="#4b4d4b" stroke-width="2.300" stroke-linecap="round"/><path d="M3 9.5h18" stroke="#4b4d4b" stroke-width="2.300" stroke-linecap="round"/><path d="M5 14.5h14" stroke="#4b4d4b" stroke-width="2.300" stroke-linecap="round"/><path d="M7 19.5h10" stroke="#4b4d4b" stroke-width="2.300" stroke-linecap="round"/></svg>
<svg class="ic" style="left:467px;top:92px;" viewBox="0 0 24 24"><path d="M8 4.5h13" stroke="#4b4d4b" stroke-width="2.300" stroke-linecap="round"/><path d="M3 9.5h18" stroke="#4b4d4b" stroke-width="2.300" stroke-linecap="round"/><path d="M6 14.5h15" stroke="#4b4d4b" stroke-width="2.300" stroke-linecap="round"/><path d="M10 19.5h11" stroke="#4b4d4b" stroke-width="2.300" stroke-linecap="round"/></svg>
<div class="sep" style="left:499px;top:95px"></div>
<svg class="ic" style="left:508px;top:92px;" viewBox="0 0 24 24"><path d="M2.2 4.5h17.8" stroke="#4b4d4b" stroke-width="2.300" stroke-linecap="round"/><path d="M2.2 11.5h13.600000000000001" stroke="#4b4d4b" stroke-width="2.300" stroke-linecap="round"/><path d="M2.2 18.5h5.8" stroke="#4b4d4b" stroke-width="2.300" stroke-linecap="round"/><path d="M17.500 10.200C22 10.500 24 13 24 15.500C24 19 21 21 17.500 21V23.700L10.800 19.300L17.500 15V17.600C19.300 17.600 20.400 17 20.400 15.600C20.400 14.200 19 13.600 17.500 13.400Z" fill="#f79a2e" stroke="#c45f06" stroke-width="1" stroke-linejoin="round"/><path d="M18.500 11.700c2.800.5 4.200 2 4.200 3.900 0 2.300-2 3.900-5.200 4.100l-1.200.1v1.800l-3.600-2.300 3.600-2.400" fill="none" stroke="#fdd9a8" stroke-width=".9"/></svg>
<svg class="ic" style="left:541px;top:92px;" viewBox="0 0 24 24"><rect x="1.500" y="4.500" width="21" height="15" fill="#f8f8f8" stroke="#d6d6d6"/><path d="M8.500 4.500v15M15.500 4.500v15M1.500 9.500h21M1.500 14.500h21" stroke="#d6d6d6"/><rect x="2" y="9.500" width="20" height="5" fill="#e6e6e6"/><path d="M5 12h14M5 12l2.500-2M5 12l2.500 2M19 12l-2.500-2M19 12l-2.500 2" stroke="#c2c2c2" stroke-width="1.200" fill="none"/></svg>
<div class="sep" style="left:573px;top:95px"></div>
<svg class="ic" style="left:582px;top:92px;" viewBox="0 0 24 24"><rect x="2.500" y="2.500" width="19" height="19" rx="2.500" fill="#f6f6f5" stroke="#9e9e9c" stroke-width="1.100"/><path d="M6 6.5h12" stroke="#77797a" stroke-width="1"/><path d="M6 9.5h6" stroke="#77797a" stroke-width="1"/></svg>
<svg class="ic" style="left:615px;top:92px;" viewBox="0 0 24 24"><rect x="2.500" y="2.500" width="19" height="19" rx="2.500" fill="#f6f6f5" stroke="#9e9e9c" stroke-width="1.100"/><path d="M6 10.5h12" stroke="#77797a" stroke-width="1"/><path d="M6 13.5h6" stroke="#77797a" stroke-width="1"/></svg>
<svg class="ic" style="left:648px;top:92px;" viewBox="0 0 24 24"><rect x="2.500" y="2.500" width="19" height="19" rx="2.500" fill="#f6f6f5" stroke="#9e9e9c" stroke-width="1.100"/><path d="M6 14.5h12" stroke="#77797a" stroke-width="1"/><path d="M6 17.5h6" stroke="#77797a" stroke-width="1"/></svg>
<div class="sep" style="left:680px;top:95px"></div>
<svg class="ic" style="left:688px;top:92px;" viewBox="0 0 24 24"><g transform="translate(-1 2)"><rect x="3.500" y="4.500" width="19" height="10" fill="#7fb45c" stroke="#5c9440"/><rect x="1.500" y="2.500" width="19" height="10" fill="#9dce78" stroke="#5c9440"/><ellipse cx="11" cy="7.500" rx="3" ry="3.500" fill="#86bd62"/><path d="M3.500 5.500v4M18.500 5.500v4" stroke="#86bd62" stroke-width="1.500"/></g><circle cx="15" cy="15" r="3.800" fill="#d9c65a" stroke="#9c8a1e"/><circle cx="11" cy="18" r="3.800" fill="#e3d16a" stroke="#9c8a1e"/><circle cx="14.500" cy="19" r="3.300" fill="#d4c050" stroke="#9c8a1e"/></svg>
<div class="dd" style="left:719.5px;top:101.5px;border-top-color:#000"></div>
<svg class="ic" style="left:733px;top:92px;" viewBox="0 0 24 24"><text x="12" y="21" text-anchor="middle" font-family="Liberation Sans, sans-serif" font-size="23" fill="#2e3436" textLength="21" lengthAdjust="spacingAndGlyphs">%</text></svg>
<svg class="ic" style="left:765px;top:92px;" viewBox="0 0 24 24"><text x="12" y="19" text-anchor="middle" font-family="DejaVu Sans, Liberation Sans, sans-serif" font-weight="bold" font-size="17" fill="#2e3436" textLength="23" lengthAdjust="spacingAndGlyphs">0.0</text></svg>
<svg class="ic" style="left:799px;top:92px;" viewBox="0 0 24 24"><rect x="2.500" y="3.500" width="19" height="18" rx="1" fill="#e9b96e" stroke="#b5791b" stroke-width="1.400"/><rect x="4.500" y="6.500" width="15" height="13" fill="#f2f2f2" stroke="#8a8a8a" stroke-width=".6"/><path d="M8 1.500v5M15 1.500v5" stroke="#a9a9a9" stroke-width="2"/><path d="M8 1.500v5M15 1.500v5" stroke="#f4f4f4" stroke-width=".8"/><text x="12" y="16.500" text-anchor="middle" font-family="Liberation Sans, sans-serif" font-size="9" fill="#666">3</text><rect x="16" y="16" width="3" height="3" fill="#bbb" stroke="#888" stroke-width=".5"/></svg>
<div class="sep" style="left:831px;top:95px"></div>
<svg class="ic" style="left:839px;top:92px;" viewBox="0 0 24 24"><path d="M7 .500v12.500M.700 6.700h12.600" stroke="#4e9a06" stroke-width="4.600"/><path d="M7 1.500v10.500M1.700 6.700h10.600" stroke="#8ae234" stroke-width="2.400"/><text x="14" y="11.500" font-family="Liberation Sans, sans-serif" font-size="9.500" fill="#2e3436">.0</text><text x="9.500" y="22" font-family="Liberation Sans, sans-serif" font-size="9.500" fill="#2e3436">.00</text></svg>
<svg class="ic" style="left:872px;top:92px;" viewBox="0 0 24 24"><rect x="1.500" y="16.500" width="12" height="4.200" rx=".8" fill="#e21b1b" stroke="#a40000"/><text x="10.500" y="11.500" font-family="Liberation Sans, sans-serif" font-size="9.500" fill="#2e3436">.00</text><text x="15.500" y="22" font-family="Liberation Sans, sans-serif" font-size="9.500" fill="#2e3436">.0</text></svg>
<div class="sep" style="left:905px;top:95px"></div>
<svg class="ic" style="left:914px;top:92px;" viewBox="0 0 24 24"><path d="M2 4.5h20" stroke="#4b4d4b" stroke-width="2.300" stroke-linecap="round"/><path d="M10 9.5h12" stroke="#4b4d4b" stroke-width="2.300" stroke-linecap="round"/><path d="M10 14.5h12" stroke="#4b4d4b" stroke-width="2.300" stroke-linecap="round"/><path d="M2 19.5h20" stroke="#4b4d4b" stroke-width="2.300" stroke-linecap="round"/><path d="M2.500 8.500l4 3.500-4 3.500" fill="none" stroke="#f08a24" stroke-width="2"/></svg>
<svg class="ic" style="left:947px;top:92px;" viewBox="0 0 24 24"><path d="M2 4.5h20" stroke="#4b4d4b" stroke-width="2.300" stroke-linecap="round"/><path d="M10 9.5h12" stroke="#4b4d4b" stroke-width="2.300" stroke-linecap="round"/><path d="M10 14.5h12" stroke="#4b4d4b" stroke-width="2.300" stroke-linecap="round"/><path d="M2 19.5h20" stroke="#4b4d4b" stroke-width="2.300" stroke-linecap="round"/><path d="M6.500 8.500l-4 3.500 4 3.500" fill="none" stroke="#f08a24" stroke-width="2"/></svg>
<div class="sep" style="left:979px;top:95px"></div>
<svg class="ic" style="left:987px;top:92px;" viewBox="0 0 24 24"><path d="M1 21.500h22" stroke="#000" opacity=".2" stroke-width="2"/><rect x="3.500" y="3.500" width="17" height="17" fill="#e9e9e7" stroke="#c6c6c4"/><path d="M12 5v7M5 12h7" stroke="#555" stroke-width="1" stroke-dasharray="1 1.500"/><rect x="12.500" y="12.500" width="8.500" height="8.500" fill="#f2f2f0" stroke="#4a7dc4" stroke-width="1.100"/></svg>
<div class="dd" style="left:1018.5px;top:101.5px;border-top-color:#000"></div>
<svg class="ic" style="left:1031px;top:92px;" viewBox="0 0 24 24"><path d="M2.500 22v-19.500h19" fill="none" stroke="#1f3f70" stroke-width="1.800"/><path d="M9.500 21v-11.500h12" fill="none" stroke="#000" stroke-width="1.400" stroke-dasharray="2 1.500"/><path d="M15.500 21v-5.500h6" fill="none" stroke="#333" stroke-width="1"/></svg>
<div class="dd" style="left:1062.5px;top:101.5px;border-top-color:#000"></div>
<svg class="ic" style="left:1075px;top:92px;" viewBox="0 0 24 24"><rect x="3.500" y="1.500" width="17" height="14" fill="#fff" stroke="#1c1c1c" stroke-width="2.600"/><rect x="5.200" y="3.200" width="13.600" height="10.600" fill="none" stroke="#6c6c6c" stroke-width=".8"/><rect x="0" y="18" width="24" height="6" fill="#000080"/></svg>
<div class="dd" style="left:1106.5px;top:101.5px;border-top-color:#000"></div>
<div class="sep" style="left:1119px;top:95px"></div>
<svg class="ic" style="left:1127px;top:92px;" viewBox="0 0 24 24"><rect x="1.500" y="1.500" width="21" height="21" fill="#f3f3f1" stroke="#b4b4b2"/><rect x="3.500" y="4" width="17" height="4" fill="#c8efb0" stroke="#4e9a06" stroke-width="1.100"/><rect x="3.500" y="10" width="17" height="4" fill="#fde0b8" stroke="#f57900" stroke-width="1.100"/><rect x="3.500" y="16" width="17" height="4" fill="#f9c0c0" stroke="#e01b1b" stroke-width="1.100"/><path d="M16 6h3.500M16 12h3.500M16 18h3.500" stroke="#444" stroke-width="1.200"/></svg>
<div class="dd" style="left:1158.5px;top:101.5px;border-top-color:#000"></div>
<div class="abs" style="left:0px;top:125px;width:126px;height:24px;background:#fff;border:1px solid #ababab"></div>
<div class="abs" style="left:107px;top:127px;width:17px;height:20px;background:#e1e1e1;border:1px solid #adadad"></div>
<svg class="abs" style="left:111px;top:134.0px" width="9" height="6" viewBox="0 0 9 6"><path d="M0.5 0.8l4 4 4-4" stroke="#444" stroke-width="1.1" fill="none"/></svg>
<span class="t" style="left:4px;top:129.5px;font-size:12px;color:#000;letter-spacing:-0.786px;">K19</span>
<div class="sep" style="left:129px;top:130px;height:15px"></div>
<svg class="ic" style="left:133px;top:125px;transform:scale(.75);" viewBox="0 0 24 24"><text x="2.500" y="19.700" font-family="Liberation Serif, serif" font-style="italic" font-weight="bold" font-size="16" fill="#a56bb8" stroke="#6a2f86" stroke-width=".7" textLength="17" lengthAdjust="spacingAndGlyphs">fx</text><path transform="translate(7 8) scale(0.9)" d="M0 -3l.9 2 2.100.2-1.600 1.500.5 2.100-1.900-1.100-1.900 1.100.5-2.100-1.600-1.500 2.100-.2z" fill="#f3d428" stroke="#b8960a" stroke-width=".5"/><path transform="translate(13 4.5) scale(1.05)" d="M0 -3l.9 2 2.100.2-1.600 1.500.5 2.100-1.900-1.100-1.900 1.100.5-2.100-1.600-1.500 2.100-.2z" fill="#f3d428" stroke="#b8960a" stroke-width=".5"/><path transform="translate(20 5) scale(1.25)" d="M0 -3l.9 2 2.100.2-1.600 1.500.5 2.100-1.900-1.100-1.900 1.100.5-2.100-1.600-1.500 2.100-.2z" fill="#f3d428" stroke="#b8960a" stroke-width=".5"/></svg>
<svg class="ic" style="left:159px;top:125px;" viewBox="0 0 24 24"><text x="12" y="19.800" text-anchor="middle" font-family="Liberation Serif, serif" font-weight="bold" font-size="22" fill="#3a3c3a" textLength="12.500" lengthAdjust="spacingAndGlyphs">Σ</text></svg>
<svg class="ic" style="left:184px;top:125px;" viewBox="0 0 24 24"><path d="M6 9.500h12M6 14h12" stroke="#2f63b5" stroke-width="2.200"/></svg>
<div class="sep" style="left:212px;top:130px;height:15px"></div>
<div class="abs" style="left:217px;top:125px;width:1629px;height:24px;background:#fff;border:1px solid #c3c3c3"></div>
<div class="abs" style="left:1849px;top:126px;width:19px;height:22px;background:#e1e1e1;border:1px solid #c6c6c6"></div>
<div class="dd" style="left:1852.5px;top:134px;border-left-width:5.5px;border-right-width:5.5px;border-top-width:6px"></div>
<div class="abs" style="left:0;top:151px;width:1857px;height:1px;background:#b6b6b6"></div>
<div class="abs" id="grid" style="left:0;top:0;width:1857px;height:946px;overflow:hidden;clip-path:inset(152px 0 0 0)">
<div class="abs" style="left:33px;top:171px;width:1824px;height:775px;background:#fff"></div>
<div class="abs" style="left:0;top:152px;width:1857px;height:18px;background:linear-gradient(#f7f7f7 0,#f7f7f7 8px,#eeeeee 9px,#ededed 18px)"></div>
<div class="abs" style="left:0;top:170px;width:1857px;height:1px;background:#5a5a5a"></div>
<div class="abs" style="left:69px;top:152px;width:1px;height:18px;background:#6e6e6e"></div>
<div class="abs" style="left:151px;top:152px;width:1px;height:18px;background:#6e6e6e"></div>
<div class="abs" style="left:255px;top:152px;width:1px;height:18px;background:#6e6e6e"></div>
<div class="abs" style="left:360px;top:152px;width:1px;height:18px;background:#6e6e6e"></div>
<div class="abs" style="left:473px;top:152px;width:1px;height:18px;background:#6e6e6e"></div>
<div class="abs" style="left:592px;top:152px;width:1px;height:18px;background:#6e6e6e"></div>
<div class="abs" style="left:700px;top:152px;width:1px;height:18px;background:#6e6e6e"></div>
<div class="abs" style="left:809px;top:152px;width:1px;height:18px;background:#6e6e6e"></div>
<div class="abs" style="left:904px;top:152px;width:1px;height:18px;background:#6e6e6e"></div>
<div class="abs" style="left:996px;top:152px;width:1px;height:18px;background:#6e6e6e"></div>
<div class="abs" style="left:1115px;top:152px;width:1px;height:18px;background:#6e6e6e"></div>
<div class="abs" style="left:1236px;top:152px;width:1px;height:18px;background:#6e6e6e"></div>
<div class="abs" style="left:1338px;top:152px;width:1px;height:18px;background:#6e6e6e"></div>
<div class="abs" style="left:1457px;top:152px;width:1px;height:18px;background:#6e6e6e"></div>
<div class="abs" style="left:996px;top:152px;width:120px;height:19px;background:linear-gradient(#61aae6 0,#61aae6 8px,#0a75d4 9px,#0a75d4 19px)"></div>
<div class="ch" style="left:33px;width:36px;"><span style="display:inline-block;transform:scaleX(0.93)">A</span></div>
<div class="ch" style="left:70px;width:81px;"><span style="display:inline-block;transform:scaleX(0.93)">B</span></div>
<div class="ch" style="left:152px;width:103px;"><span style="display:inline-block;transform:scaleX(0.93)">C</span></div>
<div class="ch" style="left:256px;width:104px;"><span style="display:inline-block;transform:scaleX(0.93)">D</span></div>
<div class="ch" style="left:361px;width:112px;"><span style="display:inline-block;transform:scaleX(0.93)">E</span></div>
<div class="ch" style="left:474px;width:118px;"><span style="display:inline-block;transform:scaleX(0.93)">F</span></div>
<div class="ch" style="left:593px;width:107px;"><span style="display:inline-block;transform:scaleX(0.93)">G</span></div>
<div class="ch" style="left:701px;width:108px;"><span style="display:inline-block;transform:scaleX(0.93)">H</span></div>
<div class="ch" style="left:810px;width:94px;"><span style="display:inline-block;transform:scaleX(0.93)">I</span></div>
<div class="ch" style="left:905px;width:91px;"><span style="display:inline-block;transform:scaleX(0.93)">J</span></div>
<div class="ch" style="left:997px;width:118px;color:#fff;font-weight:bold;"><span style="display:inline-block;transform:scaleX(0.84)">K</span></div>
<div class="ch" style="left:1116px;width:120px;"><span style="display:inline-block;transform:scaleX(0.93)">L</span></div>
<div class="ch" style="left:1237px;width:101px;"><span style="display:inline-block;transform:scaleX(0.93)">M</span></div>
<div class="ch" style="left:1339px;width:118px;"><span style="display:inline-block;transform:scaleX(0.93)">N</span></div>
<div class="ch" style="left:1458px;width:444px;"><span style="display:inline-block;transform:scaleX(0.93)">O</span></div>
<div class="abs" style="left:0;top:171px;width:32px;height:775px;background:linear-gradient(90deg,#f6f6f6 0,#f6f6f6 15px,#eeeeee 16px,#eeeeee 32px)"></div>
<div class="abs" style="left:32px;top:152px;width:1px;height:794px;background:#6a6a6a"></div>
<div class="abs" style="left:0;top:191px;width:32px;height:1px;background:#5f5f5f"></div>
<div class="abs" style="left:0;top:212px;width:32px;height:1px;background:#5f5f5f"></div>
<div class="abs" style="left:0;top:233px;width:32px;height:1px;background:#5f5f5f"></div>
<div class="abs" style="left:0;top:263px;width:32px;height:1px;background:#5f5f5f"></div>
<div class="abs" style="left:0;top:284px;width:32px;height:1px;background:#5f5f5f"></div>
<div class="abs" style="left:0;top:305px;width:32px;height:1px;background:#5f5f5f"></div>
<div class="abs" style="left:0;top:324px;width:32px;height:1px;background:#5f5f5f"></div>
<div class="abs" style="left:0;top:345px;width:32px;height:1px;background:#5f5f5f"></div>
<div class="abs" style="left:0;top:383px;width:32px;height:1px;background:#5f5f5f"></div>
<div class="abs" style="left:0;top:421px;width:32px;height:1px;background:#5f5f5f"></div>
<div class="abs" style="left:0;top:648px;width:32px;height:1px;background:#5f5f5f"></div>
<div class="abs" style="left:0;top:686px;width:32px;height:1px;background:#5f5f5f"></div>
<div class="abs" style="left:0;top:724px;width:32px;height:1px;background:#5f5f5f"></div>
<div class="abs" style="left:0;top:762px;width:32px;height:1px;background:#5f5f5f"></div>
<div class="abs" style="left:0;top:783px;width:32px;height:1px;background:#5f5f5f"></div>
<div class="abs" style="left:0;top:802px;width:32px;height:1px;background:#5f5f5f"></div>
<div class="abs" style="left:0;top:821px;width:32px;height:1px;background:#5f5f5f"></div>
<div class="abs" style="left:0;top:840px;width:32px;height:1px;background:#5f5f5f"></div>
<div class="abs" style="left:0;top:859px;width:32px;height:1px;background:#5f5f5f"></div>
<div class="abs" style="left:0;top:878px;width:32px;height:1px;background:#5f5f5f"></div>
<div class="abs" style="left:0;top:897px;width:32px;height:1px;background:#5f5f5f"></div>
<div class="abs" style="left:0;top:916px;width:32px;height:1px;background:#5f5f5f"></div>
<div class="abs" style="left:0;top:935px;width:32px;height:1px;background:#5f5f5f"></div>
<div class="abs" style="left:0;top:954px;width:32px;height:1px;background:#5f5f5f"></div>
<div class="abs" style="left:0;top:841px;width:33px;height:19px;background:linear-gradient(90deg,#61aae6 0,#61aae6 15px,#0a75d4 16px,#0a75d4 33px)"></div>
<div class="rh" style="top:171px;height:20px;line-height:23px;"><span style="display:inline-block;transform:scaleX(.88)">1</span></div>
<div class="rh" style="top:192px;height:20px;line-height:23px;"><span style="display:inline-block;transform:scaleX(.88)">2</span></div>
<div class="rh" style="top:213px;height:20px;line-height:23px;"><span style="display:inline-block;transform:scaleX(.88)">3</span></div>
<div class="rh" style="top:234px;height:29px;line-height:32px;"><span style="display:inline-block;transform:scaleX(.88)">4</span></div>
<div class="rh" style="top:264px;height:20px;line-height:23px;"><span style="display:inline-block;transform:scaleX(.88)">5</span></div>
<div class="rh" style="top:285px;height:20px;line-height:23px;"><span style="display:inline-block;transform:scaleX(.88)">6</span></div>
<div class="rh" style="top:306px;height:18px;line-height:21px;"><span style="display:inline-block;transform:scaleX(.88)">7</span></div>
<div class="rh" style="top:325px;height:20px;line-height:23px;"><span style="display:inline-block;transform:scaleX(.88)">8</span></div>
<div class="rh" style="top:346px;height:37px;line-height:40px;"><span style="display:inline-block;transform:scaleX(.88)">9</span></div>
<div class="rh" style="top:384px;height:37px;line-height:40px;"><span style="display:inline-block;transform:scaleX(.88)">10</span></div>
<div class="rh" style="top:422px;height:226px;line-height:229px;"><span style="display:inline-block;transform:scaleX(.88)">11</span></div>
<div class="rh" style="top:649px;height:37px;line-height:40px;"><span style="display:inline-block;transform:scaleX(.88)">12</span></div>
<div class="rh" style="top:687px;height:37px;line-height:40px;"><span style="display:inline-block;transform:scaleX(.88)">13</span></div>
<div class="rh" style="top:725px;height:37px;line-height:40px;"><span style="display:inline-block;transform:scaleX(.88)">14</span></div>
<div class="rh" style="top:763px;height:20px;line-height:23px;"><span style="display:inline-block;transform:scaleX(.88)">15</span></div>
<div class="rh" style="top:784px;height:18px;line-height:21px;"><span style="display:inline-block;transform:scaleX(.88)">16</span></div>
<div class="rh" style="top:803px;height:18px;line-height:21px;"><span style="display:inline-block;transform:scaleX(.88)">17</span></div>
<div class="rh" style="top:822px;height:18px;line-height:21px;"><span style="display:inline-block;transform:scaleX(.88)">18</span></div>
<div class="rh" style="top:841px;height:18px;line-height:21px;color:#fff;font-weight:bold;"><span style="display:inline-block;transform:scaleX(.88)">19</span></div>
<div class="rh" style="top:860px;height:18px;line-height:21px;"><span style="display:inline-block;transform:scaleX(.88)">20</span></div>
<div class="rh" style="top:879px;height:18px;line-height:21px;"><span style="display:inline-block;transform:scaleX(.88)">21</span></div>
<div class="rh" style="top:898px;height:18px;line-height:21px;"><span style="display:inline-block;transform:scaleX(.88)">22</span></div>
<div class="rh" style="top:917px;height:18px;line-height:21px;"><span style="display:inline-block;transform:scaleX(.88)">23</span></div>
<div class="rh" style="top:936px;height:18px;line-height:21px;"><span style="display:inline-block;transform:scaleX(.88)">24</span></div>
<div class="gl" style="left:33px;top:191px;width:1823px;height:1px"></div>
<div class="gl" style="left:33px;top:212px;width:1823px;height:1px"></div>
<div class="gl" style="left:33px;top:233px;width:1823px;height:1px"></div>
<div class="gl" style="left:33px;top:263px;width:1823px;height:1px"></div>
<div class="gl" style="left:33px;top:284px;width:1823px;height:1px"></div>
<div class="gl" style="left:33px;top:305px;width:1823px;height:1px"></div>
<div class="gl" style="left:33px;top:324px;width:1823px;height:1px"></div>
<div class="gl" style="left:33px;top:345px;width:1823px;height:1px"></div>
<div class="gl" style="left:33px;top:383px;width:1823px;height:1px"></div>
<div class="gl" style="left:33px;top:421px;width:1823px;height:1px"></div>
<div class="gl" style="left:33px;top:648px;width:1823px;height:1px"></div>
<div class="gl" style="left:33px;top:686px;width:1823px;height:1px"></div>
<div class="gl" style="left:33px;top:724px;width:1823px;height:1px"></div>
<div class="gl" style="left:33px;top:762px;width:1823px;height:1px"></div>
<div class="gl" style="left:33px;top:783px;width:1823px;height:1px"></div>
<div class="gl" style="left:33px;top:802px;width:1823px;height:1px"></div>
<div class="gl" style="left:33px;top:821px;width:1823px;height:1px"></div>
<div class="gl" style="left:33px;top:840px;width:1823px;height:1px"></div>
<div class="gl" style="left:33px;top:859px;width:1823px;height:1px"></div>
<div class="gl" style="left:33px;top:878px;width:1823px;height:1px"></div>
<div class="gl" style="left:33px;top:897px;width:1823px;height:1px"></div>
<div class="gl" style="left:33px;top:916px;width:1823px;height:1px"></div>
<div class="gl" style="left:33px;top:935px;width:1823px;height:1px"></div>
<div class="gl" style="left:69px;top:171px;width:1px;height:62px"></div>
<div class="gl" style="left:69px;top:306px;width:1px;height:640px"></div>
<div class="gl" style="left:151px;top:171px;width:1px;height:62px"></div>
<div class="gl" style="left:151px;top:306px;width:1px;height:640px"></div>
<div class="gl" style="left:255px;top:171px;width:1px;height:62px"></div>
<div class="gl" style="left:255px;top:306px;width:1px;height:640px"></div>
<div class="gl" style="left:360px;top:171px;width:1px;height:62px"></div>
<div class="gl" style="left:360px;top:306px;width:1px;height:640px"></div>
<div class="gl" style="left:473px;top:171px;width:1px;height:62px"></div>
<div class="gl" style="left:473px;top:306px;width:1px;height:640px"></div>
<div class="gl" style="left:592px;top:171px;width:1px;height:62px"></div>
<div class="gl" style="left:592px;top:306px;width:1px;height:640px"></div>
<div class="gl" style="left:700px;top:171px;width:1px;height:62px"></div>
<div class="gl" style="left:700px;top:306px;width:1px;height:640px"></div>
<div class="gl" style="left:809px;top:171px;width:1px;height:62px"></div>
<div class="gl" style="left:809px;top:306px;width:1px;height:640px"></div>
<div class="gl" style="left:904px;top:171px;width:1px;height:62px"></div>
<div class="gl" style="left:904px;top:306px;width:1px;height:640px"></div>
<div class="gl" style="left:996px;top:171px;width:1px;height:62px"></div>
<div class="gl" style="left:996px;top:306px;width:1px;height:640px"></div>
<div class="gl" style="left:1115px;top:171px;width:1px;height:62px"></div>
<div class="gl" style="left:1115px;top:306px;width:1px;height:640px"></div>
<div class="gl" style="left:1236px;top:171px;width:1px;height:62px"></div>
<div class="gl" style="left:1236px;top:306px;width:1px;height:640px"></div>
<div class="gl" style="left:1338px;top:171px;width:1px;height:62px"></div>
<div class="gl" style="left:1338px;top:306px;width:1px;height:640px"></div>
<div class="gl" style="left:1457px;top:171px;width:1px;height:62px"></div>
<div class="gl" style="left:1457px;top:306px;width:1px;height:640px"></div>
<div class="abs" style="left:33px;top:325px;width:1824px;height:20px;background:#ffffcc"></div>
<div class="abs" style="left:33px;top:763px;width:1824px;height:20px;background:#ffffcc"></div>
<div class="hl" style="left:33px;top:324px;width:1824px;height:1px"></div>
<div class="hl" style="left:33px;top:345px;width:1824px;height:1px"></div>
<div class="hl" style="left:33px;top:383px;width:1824px;height:1px"></div>
<div class="hl" style="left:33px;top:421px;width:1824px;height:1px"></div>
<div class="hl" style="left:33px;top:648px;width:1824px;height:1px"></div>
<div class="hl" style="left:33px;top:686px;width:1824px;height:1px"></div>
<div class="hl" style="left:33px;top:724px;width:1824px;height:1px"></div>
<div class="hl" style="left:33px;top:762px;width:1824px;height:1px"></div>
<div class="hl" style="left:33px;top:783px;width:1824px;height:1px"></div>
<div class="hl" style="left:69px;top:324px;width:1px;height:461px"></div>
<div class="hl" style="left:151px;top:324px;width:1px;height:461px"></div>
<div class="hl" style="left:255px;top:324px;width:1px;height:461px"></div>
<div class="hl" style="left:360px;top:324px;width:1px;height:461px"></div>
<div class="hl" style="left:473px;top:324px;width:1px;height:461px"></div>
<div class="hl" style="left:592px;top:324px;width:1px;height:461px"></div>
<div class="hl" style="left:700px;top:324px;width:1px;height:461px"></div>
<div class="hl" style="left:809px;top:324px;width:1px;height:461px"></div>
<div class="hl" style="left:904px;top:324px;width:1px;height:461px"></div>
<div class="hl" style="left:996px;top:324px;width:1px;height:461px"></div>
<div class="hl" style="left:1115px;top:324px;width:1px;height:461px"></div>
<div class="hl" style="left:1236px;top:324px;width:1px;height:461px"></div>
<div class="hl" style="left:1338px;top:324px;width:1px;height:461px"></div>
<div class="hl" style="left:1457px;top:324px;width:1px;height:461px"></div>
<div class="cell b" style="left:33px;top:171px;width:36px;height:20px;padding:0 0px 0 2px;overflow:visible;padding-top:1px;"><div>ptduong1</div></div>
<div class="cell " style="left:33px;top:192px;width:36px;height:20px;padding:0 0px 0 2px;overflow:visible;"><div>123</div></div>
<div class="cell " style="left:33px;top:213px;width:36px;height:20px;padding:0 0px 0 2px;overflow:visible;"><div>0369999999</div></div>
<div class="cell c b" style="left:33px;top:234px;width:2504px;height:29px;font-size:24px;line-height:26px;padding-bottom:2px;padding-left:2px;"><div><span class="sp">SỔ</span> <span class="sp">GIAO</span> <span class="sp">HÀNG</span></div></div>
<div class="cell c i" style="left:33px;top:264px;width:2504px;height:20px;"><div><span class="sp">Ngày</span> <span class="sp">tạo</span> <span class="sp">đơn</span>: <span class="sp">Từ</span> <span class="sp">ngày</span>: 01/03/2020 <span class="sp">Đến</span> <span class="sp">ngày</span>: 31/03/2020</div></div>
<div class="cell c i" style="left:33px;top:285px;width:2504px;height:20px;"><div><span class="sp">Nhân</span> <span class="sp">viên</span> <span class="sp">thu</span> <span class="sp">ngân</span>: <span class="sp">Tất</span> <span class="sp">cả</span>; <span class="sp">Nhân</span> <span class="sp">viên</span> <span class="sp">bán</span> <span class="sp">hàng</span>: <span class="sp">Tất</span> <span class="sp">cả</span>; <span class="sp">Khách</span> <span class="sp">hàng</span>: <span class="sp">Tất</span> <span class="sp">cả</span>; <span class="sp">Trạng</span> <span class="sp">thái</span> <span class="sp">hóa</span> <span class="sp">đơn</span>: <span class="sp">Tất</span> <span class="sp">cả</span></div></div>
<div class="cell b" style="left:33px;top:325px;width:36px;height:20px;padding:0 0px 0 2px;align-items:flex-end;padding-bottom:0px;line-height:18px;"><div><span class="sp">STT</span></div></div>
<div class="cell b c" style="left:70px;top:325px;width:81px;height:20px;padding:0 0px 0 0px;align-items:flex-end;padding-bottom:0px;line-height:18px;clip-path:inset(0 4px 0 4px);"><div><span class="sp">Ngày</span> <span class="sp">tạo</span> <span class="sp">đơn</span></div></div>
<div class="cell b c" style="left:152px;top:325px;width:103px;height:20px;padding:0 0px 0 0px;align-items:flex-end;padding-bottom:0px;line-height:18px;"><div><span class="sp">Giờ</span> <span class="sp">tạo</span> <span class="sp">đơn</span></div></div>
<div class="cell b" style="left:256px;top:325px;width:104px;height:20px;padding:0 0px 0 2px;align-items:flex-end;padding-bottom:0px;line-height:18px;clip-path:inset(0 4px 0 0px);"><div><span class="sp">Trạng</span> <span class="sp">thái</span> <span class="sp">HĐ</span></div></div>
<div class="cell b c" style="left:361px;top:325px;width:112px;height:20px;padding:0 0px 0 0px;align-items:flex-end;padding-bottom:0px;line-height:18px;"><div><span class="sp">Số</span> <span class="sp">HĐ</span></div></div>
<div class="cell b c" style="left:474px;top:325px;width:118px;height:20px;padding:0 0px 0 0px;align-items:flex-end;padding-bottom:0px;line-height:18px;"><div><span class="sp">Ngày</span> <span class="sp">giao</span> <span class="sp">hàng</span></div></div>
<div class="cell b c" style="left:593px;top:325px;width:107px;height:20px;padding:0 0px 0 0px;align-items:flex-end;padding-bottom:0px;line-height:18px;"><div><span class="sp">Giờ</span> <span class="sp">giao</span> <span class="sp">hàng</span></div></div>
<div class="cell b c" style="left:701px;top:325px;width:108px;height:20px;padding:0 0px 0 0px;align-items:flex-end;padding-bottom:0px;line-height:18px;"><div><span class="sp">Ngày</span> <span class="sp">hóa</span> <span class="sp">đơn</span></div></div>
<div class="cell b c" style="left:810px;top:325px;width:94px;height:20px;padding:0 0px 0 0px;align-items:flex-end;padding-bottom:0px;line-height:18px;"><div><span class="sp">Giờ</span> <span class="sp">hóa</span> <span class="sp">đơn</span></div></div>
<div class="cell b c" style="left:905px;top:325px;width:91px;height:20px;padding:0 0px 0 0px;align-items:flex-end;padding-bottom:0px;line-height:18px;"><div><span class="sp">Người</span> <span class="sp">nhận</span></div></div>
<div class="cell b" style="left:997px;top:325px;width:118px;height:20px;padding:0 0px 0 2px;align-items:flex-end;padding-bottom:0px;line-height:18px;clip-path:inset(0 4px 0 0px);"><div><span class="sp">SĐT</span> <span class="sp">người</span> <span class="sp">nhận</span></div></div>
<div class="cell b c" style="left:1116px;top:325px;width:120px;height:20px;padding:0 0px 0 0px;align-items:flex-end;padding-bottom:0px;line-height:18px;"><div><span class="sp">Phường</span>/<span class="sp">Xã</span></div></div>
<div class="cell b c" style="left:1237px;top:325px;width:101px;height:20px;padding:0 0px 0 0px;align-items:flex-end;padding-bottom:0px;line-height:18px;"><div><span class="sp">Quận</span>/<span class="sp">Huyện</span></div></div>
<div class="cell b c" style="left:1339px;top:325px;width:118px;height:20px;padding:0 0px 0 0px;align-items:flex-end;padding-bottom:0px;line-height:18px;"><div><span class="sp">Tỉnh</span>/<span class="sp">Thành</span> <span class="sp">phố</span></div></div>
<div class="cell b c" style="left:1458px;top:325px;width:444px;height:20px;padding:0 0px 0 0px;align-items:flex-end;padding-bottom:0px;line-height:18px;"><div><span class="sp">Thông</span> <span class="sp">tin</span> <span class="sp">hàng</span> <span class="sp">hóa</span></div></div>
<div class="cell " style="left:33px;top:346px;width:36px;height:37px;padding:0 2px 0 3px;"><div>1</div></div>
<div class="cell c" style="left:70px;top:346px;width:81px;height:37px;padding:0 0px 0 0px;"><div>23/03/2020</div></div>
<div class="cell c" style="left:152px;top:346px;width:103px;height:37px;padding:0 0px 0 0px;"><div>10:49:35</div></div>
<div class="cell " style="left:256px;top:346px;width:104px;height:37px;padding:0 0px 0 2px;"><div><span class="sp">Hoàn</span> <span class="sp">thành</span></div></div>
<div class="cell " style="left:361px;top:346px;width:112px;height:37px;padding:0 0px 0 2px;"><div>2003020006</div></div>
<div class="cell c" style="left:474px;top:346px;width:118px;height:37px;padding:0 0px 0 0px;"><div>23/03/2020</div></div>
<div class="cell c" style="left:593px;top:346px;width:107px;height:37px;padding:0 0px 0 0px;"><div>10:49:35</div></div>
<div class="cell c" style="left:701px;top:346px;width:108px;height:37px;padding:0 0px 0 0px;"><div>23/03/2020</div></div>
<div class="cell c" style="left:810px;top:346px;width:94px;height:37px;padding:0 0px 0 0px;"><div>10:51:19</div></div>
<div class="cell " style="left:905px;top:346px;width:91px;height:37px;padding:0 0px 0 2px;"><div><span class="sp">chị</span> <span class="sp">dương</span></div></div>
<div class="cell " style="left:997px;top:346px;width:118px;height:37px;padding:0 0px 0 2px;"><div>3458748</div></div>
<div class="cell " style="left:1116px;top:346px;width:120px;height:37px;padding:0 0px 0 2px;"><div><span class="sp">Phường</span> <span class="sp">Phúc</span> <span class="sp">Xá</span></div></div>
<div class="cell " style="left:1237px;top:346px;width:101px;height:37px;padding:0 0px 0 2px;"><div><span class="sp">Quận</span> Ba <span class="sp">Đình</span></div></div>
<div class="cell " style="left:1339px;top:346px;width:118px;height:37px;padding:0 0px 0 2px;"><div><span class="sp">Hà</span> <span class="sp">Nội</span></div></div>
<div class="cell " style="left:1458px;top:346px;width:444px;height:37px;padding:0 0px 0 2px;line-height:17px;padding-top:1px;"><div> <span class="sp">Áo</span> <span class="sp">bơi</span> <span class="sp">tay</span> <span class="sp">dài</span> <span class="sp">chống</span> <span class="sp">nắng</span> <span class="sp">TYR</span> <span class="sp">Ostend</span> Long Sleeve <span class="sp">Rashguard</span> 14<br><span class="sp">BLK</span>/RED <span class="sp">Đen</span>/<span class="sp">Đỏ</span> M/30 - 1 <span class="sp">Cái</span></div></div>
<div class="cell " style="left:33px;top:384px;width:36px;height:37px;padding:0 2px 0 3px;"><div>2</div></div>
<div class="cell c" style="left:70px;top:384px;width:81px;height:37px;padding:0 0px 0 0px;"><div>23/03/2020</div></div>
<div class="cell c" style="left:152px;top:384px;width:103px;height:37px;padding:0 0px 0 0px;"><div>16:21:10</div></div>
<div class="cell " style="left:256px;top:384px;width:104px;height:37px;padding:0 0px 0 2px;"><div><span class="sp">Chờ</span> <span class="sp">thu</span> COD</div></div>
<div class="cell " style="left:361px;top:384px;width:112px;height:37px;padding:0 0px 0 2px;"><div>2003020007NB</div></div>
<div class="cell c" style="left:474px;top:384px;width:118px;height:37px;padding:0 0px 0 0px;"><div>23/03/2020</div></div>
<div class="cell c" style="left:593px;top:384px;width:107px;height:37px;padding:0 0px 0 0px;"><div>11:14:00</div></div>
<div class="cell c" style="left:701px;top:384px;width:108px;height:37px;padding:0 0px 0 0px;"><div>23/03/2020</div></div>
<div class="cell c" style="left:810px;top:384px;width:94px;height:37px;padding:0 0px 0 0px;"><div>11:14:00</div></div>
<div class="cell " style="left:905px;top:384px;width:91px;height:37px;padding:0 0px 0 2px;"><div><span class="sp">chị</span> <span class="sp">dương</span></div></div>
<div class="cell " style="left:997px;top:384px;width:118px;height:37px;padding:0 0px 0 2px;"><div>3458748</div></div>
<div class="cell " style="left:1116px;top:384px;width:120px;height:37px;padding:0 0px 0 2px;"><div><span class="sp">Phường</span> <span class="sp">Phúc</span> <span class="sp">Xá</span></div></div>
<div class="cell " style="left:1237px;top:384px;width:101px;height:37px;padding:0 0px 0 2px;"><div><span class="sp">Quận</span> Ba <span class="sp">Đình</span></div></div>
<div class="cell " style="left:1339px;top:384px;width:118px;height:37px;padding:0 0px 0 2px;"><div><span class="sp">Hà</span> <span class="sp">Nội</span></div></div>
<div class="cell " style="left:1458px;top:384px;width:444px;height:37px;padding:0 0px 0 2px;line-height:17px;padding-top:1px;"><div> <span class="sp">áo</span> <span class="sp">hoa</span> (<span class="sp">đỏ</span>) - 1 <span class="sp">Chiếc</span></div></div>
<div class="cell " style="left:33px;top:422px;width:36px;height:226px;padding:0 2px 0 3px;"><div>3</div></div>
<div class="cell c" style="left:70px;top:422px;width:81px;height:226px;padding:0 0px 0 0px;"><div>27/03/2020</div></div>
<div class="cell c" style="left:152px;top:422px;width:103px;height:226px;padding:0 0px 0 0px;"><div>08:47:41</div></div>
<div class="cell " style="left:256px;top:422px;width:104px;height:226px;padding:0 0px 0 2px;clip-path:inset(0 4px 0 0px);"><div><span class="sp">Đang</span> <span class="sp">giao</span> <span class="sp">hàng</span></div></div>
<div class="cell " style="left:361px;top:422px;width:112px;height:226px;padding:0 0px 0 2px;"><div>2003020016</div></div>
<div class="cell c" style="left:474px;top:422px;width:118px;height:226px;padding:0 0px 0 0px;"><div>27/03/2020</div></div>
<div class="cell c" style="left:593px;top:422px;width:107px;height:226px;padding:0 0px 0 0px;"><div>08:47:41</div></div>
<div class="cell c" style="left:701px;top:422px;width:108px;height:226px;padding:0 0px 0 0px;"><div></div></div>
<div class="cell c" style="left:810px;top:422px;width:94px;height:226px;padding:0 0px 0 0px;"><div></div></div>
<div class="cell " style="left:905px;top:422px;width:91px;height:226px;padding:0 0px 0 2px;"><div><span class="sp">chị</span> <span class="sp">dương</span></div></div>
<div class="cell " style="left:997px;top:422px;width:118px;height:226px;padding:0 0px 0 2px;"><div>3458748</div></div>
<div class="cell " style="left:1116px;top:422px;width:120px;height:226px;padding:0 0px 0 2px;"><div><span class="sp">Phường</span> <span class="sp">Phúc</span> <span class="sp">Xá</span></div></div>
<div class="cell " style="left:1237px;top:422px;width:101px;height:226px;padding:0 0px 0 2px;"><div><span class="sp">Quận</span> Ba <span class="sp">Đình</span></div></div>
<div class="cell " style="left:1339px;top:422px;width:118px;height:226px;padding:0 0px 0 2px;"><div><span class="sp">Hà</span> <span class="sp">Nội</span></div></div>
<div class="cell " style="left:1458px;top:422px;width:444px;height:226px;padding:0 0px 0 2px;line-height:17px;padding-top:1px;"><div> <span class="sp">Áo</span> <span class="sp">bơi</span> <span class="sp">tay</span> <span class="sp">dài</span> <span class="sp">chống</span> <span class="sp">nắng</span> <span class="sp">TYR</span> <span class="sp">Ostend</span> Long Sleeve <span class="sp">Rashguard</span> 14<br><span class="sp">BLK</span>/RED <span class="sp">Đen</span>/<span class="sp">Đỏ</span> 2XL/36 - 1 <span class="sp">Cái</span>, <span class="sp">Áo</span> <span class="sp">bơi</span> <span class="sp">tay</span> <span class="sp">dài</span> <span class="sp">chống</span> <span class="sp">nắng</span><br><span class="sp">TYR</span> <span class="sp">Ostend</span> Long Sleeve <span class="sp">Rashguard</span> 14 <span class="sp">BLK</span>/RED <span class="sp">Đen</span>/<span class="sp">Đỏ</span> L/32 -<br>1 <span class="sp">Cái</span>, <span class="sp">Áo</span> <span class="sp">bơi</span> <span class="sp">tay</span> <span class="sp">dài</span> <span class="sp">chống</span> <span class="sp">nắng</span> <span class="sp">TYR</span> <span class="sp">Ostend</span> Long Sleeve<br><span class="sp">Rashguard</span> 14 <span class="sp">BLK</span>/RED <span class="sp">Đen</span>/<span class="sp">Đỏ</span> M/30 - 1 <span class="sp">Cái</span>, <span class="sp">Áo</span> <span class="sp">bơi</span> <span class="sp">tay</span> <span class="sp">dài</span><br><span class="sp">chống</span> <span class="sp">nắng</span> <span class="sp">TYR</span> <span class="sp">Ostend</span> Long Sleeve <span class="sp">Rashguard</span> 14 <span class="sp">BLK</span>/RED<br><span class="sp">Đen</span>/<span class="sp">Đỏ</span> XL/34 - 1 <span class="sp">Cái</span>, <span class="sp">Áo</span> <span class="sp">bơi</span> <span class="sp">tay</span> <span class="sp">dài</span> <span class="sp">chống</span> <span class="sp">nắng</span> <span class="sp">TYR</span> <span class="sp">Ostend</span><br>Long Sleeve <span class="sp">Rashguard</span> 22 <span class="sp">NVY</span>/BLU <span class="sp">Xanh</span> <span class="sp">dương</span> 2XL/36 - 1 <span class="sp">Cái</span>,<br><span class="sp">Áo</span> <span class="sp">bơi</span> <span class="sp">tay</span> <span class="sp">dài</span> <span class="sp">chống</span> <span class="sp">nắng</span> <span class="sp">TYR</span> <span class="sp">Ostend</span> Long Sleeve <span class="sp">Rashguard</span> 22<br><span class="sp">NVY</span>/BLU <span class="sp">Xanh</span> <span class="sp">dương</span> L/32 - 1 <span class="sp">Cái</span>, <span class="sp">Áo</span> <span class="sp">bơi</span> <span class="sp">tay</span> <span class="sp">dài</span> <span class="sp">chống</span> <span class="sp">nắng</span><br><span class="sp">TYR</span> <span class="sp">Ostend</span> Long Sleeve <span class="sp">Rashguard</span> 22 <span class="sp">NVY</span>/BLU <span class="sp">Xanh</span> <span class="sp">dương</span><br>XL/34 - 1 <span class="sp">Cái</span></div></div>
<div class="cell " style="left:33px;top:649px;width:36px;height:37px;padding:0 2px 0 3px;"><div>4</div></div>
<div class="cell c" style="left:70px;top:649px;width:81px;height:37px;padding:0 0px 0 0px;"><div>27/03/2020</div></div>
<div class="cell c" style="left:152px;top:649px;width:103px;height:37px;padding:0 0px 0 0px;"><div>08:48:59</div></div>
<div class="cell " style="left:256px;top:649px;width:104px;height:37px;padding:0 0px 0 2px;clip-path:inset(0 4px 0 0px);"><div><span class="sp">Đang</span> <span class="sp">giao</span> <span class="sp">hàng</span></div></div>
<div class="cell " style="left:361px;top:649px;width:112px;height:37px;padding:0 0px 0 2px;"><div>2003020017</div></div>
<div class="cell c" style="left:474px;top:649px;width:118px;height:37px;padding:0 0px 0 0px;"><div>27/03/2020</div></div>
<div class="cell c" style="left:593px;top:649px;width:107px;height:37px;padding:0 0px 0 0px;"><div>08:48:59</div></div>
<div class="cell c" style="left:701px;top:649px;width:108px;height:37px;padding:0 0px 0 0px;"><div></div></div>
<div class="cell c" style="left:810px;top:649px;width:94px;height:37px;padding:0 0px 0 0px;"><div></div></div>
<div class="cell " style="left:905px;top:649px;width:91px;height:37px;padding:0 0px 0 2px;"><div><span class="sp">Minh</span> <span class="sp">anh</span></div></div>
<div class="cell " style="left:997px;top:649px;width:118px;height:37px;padding:0 0px 0 2px;"><div>0358965862</div></div>
<div class="cell " style="left:1116px;top:649px;width:120px;height:37px;padding:0 0px 0 2px;"><div><span class="sp">Phường</span> <span class="sp">Phúc</span> <span class="sp">Xá</span></div></div>
<div class="cell " style="left:1237px;top:649px;width:101px;height:37px;padding:0 0px 0 2px;"><div><span class="sp">Quận</span> Ba <span class="sp">Đình</span></div></div>
<div class="cell " style="left:1339px;top:649px;width:118px;height:37px;padding:0 0px 0 2px;"><div><span class="sp">Hà</span> <span class="sp">Nội</span></div></div>
<div class="cell " style="left:1458px;top:649px;width:444px;height:37px;padding:0 0px 0 2px;line-height:17px;padding-top:1px;"><div> <span class="sp">Áo</span> <span class="sp">bơi</span> <span class="sp">tay</span> <span class="sp">dài</span> <span class="sp">chống</span> <span class="sp">nắng</span> <span class="sp">TYR</span> <span class="sp">Ostend</span> Long Sleeve <span class="sp">Rashguard</span> 14<br><span class="sp">BLK</span>/RED <span class="sp">Đen</span>/<span class="sp">Đỏ</span> M/30 - 1 <span class="sp">Cái</span></div></div>
<div class="cell " style="left:33px;top:687px;width:36px;height:37px;padding:0 2px 0 3px;"><div>5</div></div>
<div class="cell c" style="left:70px;top:687px;width:81px;height:37px;padding:0 0px 0 0px;"><div>27/03/2020</div></div>
<div class="cell c" style="left:152px;top:687px;width:103px;height:37px;padding:0 0px 0 0px;"><div>09:19:28</div></div>
<div class="cell " style="left:256px;top:687px;width:104px;height:37px;padding:0 0px 0 2px;"><div><span class="sp">Chờ</span> <span class="sp">thu</span> COD</div></div>
<div class="cell " style="left:361px;top:687px;width:112px;height:37px;padding:0 0px 0 2px;"><div>2003020020</div></div>
<div class="cell c" style="left:474px;top:687px;width:118px;height:37px;padding:0 0px 0 0px;"><div>27/03/2020</div></div>
<div class="cell c" style="left:593px;top:687px;width:107px;height:37px;padding:0 0px 0 0px;"><div>09:19:28</div></div>
<div class="cell c" style="left:701px;top:687px;width:108px;height:37px;padding:0 0px 0 0px;"><div>27/03/2020</div></div>
<div class="cell c" style="left:810px;top:687px;width:94px;height:37px;padding:0 0px 0 0px;"><div>10:17:00</div></div>
<div class="cell " style="left:905px;top:687px;width:91px;height:37px;padding:0 0px 0 2px;"><div><span class="sp">Minh</span> <span class="sp">anh</span></div></div>
<div class="cell " style="left:997px;top:687px;width:118px;height:37px;padding:0 0px 0 2px;"><div>0358965862</div></div>
<div class="cell " style="left:1116px;top:687px;width:120px;height:37px;padding:0 0px 0 2px;"><div><span class="sp">Phường</span> <span class="sp">Phúc</span> <span class="sp">Xá</span></div></div>
<div class="cell " style="left:1237px;top:687px;width:101px;height:37px;padding:0 0px 0 2px;"><div><span class="sp">Quận</span> Ba <span class="sp">Đình</span></div></div>
<div class="cell " style="left:1339px;top:687px;width:118px;height:37px;padding:0 0px 0 2px;"><div><span class="sp">Hà</span> <span class="sp">Nội</span></div></div>
<div class="cell " style="left:1458px;top:687px;width:444px;height:37px;padding:0 0px 0 2px;line-height:17px;padding-top:1px;"><div> <span class="sp">Quần</span> <span class="sp">bơi</span> <span class="sp">đùi</span> <span class="sp">TYR</span> Filament Boxer 17 <span class="sp">BLK</span>/<span class="sp">LIM</span> <span class="sp">Đen</span>/<span class="sp">Xanh</span> Chuối<br>S/28 - 1 <span class="sp">Cái</span>, test <span class="sp">vị</span> <span class="sp">trí</span> - 1 <span class="sp">Chiếc</span>, test <span class="sp">vị</span> <span class="sp">trí</span> - <span class="sp">Lô</span> - 1 <span class="sp">Chiếc</span></div></div>
<div class="cell " style="left:33px;top:725px;width:36px;height:37px;padding:0 2px 0 3px;"><div>6</div></div>
<div class="cell c" style="left:70px;top:725px;width:81px;height:37px;padding:0 0px 0 0px;"><div>27/03/2020</div></div>
<div class="cell c" style="left:152px;top:725px;width:103px;height:37px;padding:0 0px 0 0px;"><div>09:15:16</div></div>
<div class="cell " style="left:256px;top:725px;width:104px;height:37px;padding:0 0px 0 2px;clip-path:inset(0 4px 0 0px);"><div><span class="sp">Đã</span> <span class="sp">chuyển</span> <span class="sp">hoàn</span></div></div>
<div class="cell " style="left:361px;top:725px;width:112px;height:37px;padding:0 0px 0 2px;"><div>2003020019</div></div>
<div class="cell c" style="left:474px;top:725px;width:118px;height:37px;padding:0 0px 0 0px;"><div>27/03/2020</div></div>
<div class="cell c" style="left:593px;top:725px;width:107px;height:37px;padding:0 0px 0 0px;"><div>09:50:17</div></div>
<div class="cell c" style="left:701px;top:725px;width:108px;height:37px;padding:0 0px 0 0px;"><div>27/03/2020</div></div>
<div class="cell c" style="left:810px;top:725px;width:94px;height:37px;padding:0 0px 0 0px;"><div>10:00:27</div></div>
<div class="cell " style="left:905px;top:725px;width:91px;height:37px;padding:0 0px 0 2px;"><div><span class="sp">Minh</span> <span class="sp">anh</span></div></div>
<div class="cell " style="left:997px;top:725px;width:118px;height:37px;padding:0 0px 0 2px;"><div>0358965862</div></div>
<div class="cell " style="left:1116px;top:725px;width:120px;height:37px;padding:0 0px 0 2px;"><div><span class="sp">Phường</span> <span class="sp">Phúc</span> <span class="sp">Xá</span></div></div>
<div class="cell " style="left:1237px;top:725px;width:101px;height:37px;padding:0 0px 0 2px;"><div><span class="sp">Quận</span> Ba <span class="sp">Đình</span></div></div>
<div class="cell " style="left:1339px;top:725px;width:118px;height:37px;padding:0 0px 0 2px;"><div><span class="sp">Hà</span> <span class="sp">Nội</span></div></div>
<div class="cell " style="left:1458px;top:725px;width:444px;height:37px;padding:0 0px 0 2px;line-height:17px;padding-top:1px;"><div> <span class="sp">Áo</span> <span class="sp">bơi</span> <span class="sp">tay</span> <span class="sp">dài</span> <span class="sp">chống</span> <span class="sp">nắng</span> <span class="sp">TYR</span> <span class="sp">Ostend</span> Long Sleeve <span class="sp">Rashguard</span> 14<br><span class="sp">BLK</span>/RED <span class="sp">Đen</span>/<span class="sp">Đỏ</span> M/30 - -1 <span class="sp">Cái</span></div></div>
<div class="tri" style="left:148px;top:331px;border-left:4px solid #e00000"></div>
<div class="tri" style="left:70px;top:331px;border-right:4px solid #e00000"></div>
<div class="tri" style="left:357px;top:331px;border-left:4px solid #e00000"></div>
<div class="tri" style="left:1112px;top:331px;border-left:4px solid #e00000"></div>
<div class="tri" style="left:357px;top:533px;border-left:4px solid #e00000"></div>
<div class="tri" style="left:357px;top:665px;border-left:4px solid #e00000"></div>
<div class="tri" style="left:357px;top:741px;border-left:4px solid #e00000"></div>
<div class="abs" style="left:1856px;top:171px;width:1px;height:775px;background:#fff"></div>
<div class="abs" style="left:996px;top:840px;width:120px;height:20px;border:2px solid #000"></div>
<div class="abs" style="left:1113px;top:857px;width:5px;height:5px;background:#000"></div>
</div>
<div class="abs" style="left:1857px;top:152px;width:16px;height:793px;background:#f0f0f0"></div>
<div class="abs" style="left:1856px;top:152px;width:18px;height:5px;background:#a9a9a9"></div>
<div class="abs" style="left:1860px;top:154px;width:9px;height:1px;background:#000"></div>
<svg class="abs" style="left:1860px;top:162px" width="10" height="7" viewBox="0 0 10 7"><path d="M1 5.5l3.7-3.7 3.7 3.7" stroke="#505050" stroke-width="1.6" fill="none"/></svg>
<svg class="abs" style="left:1860px;top:933px" width="10" height="7" viewBox="0 0 10 7"><path d="M1 1.5l3.7 3.7 3.7-3.7" stroke="#505050" stroke-width="1.6" fill="none"/></svg>
<div class="abs" style="left:1857px;top:174px;width:16px;height:360px;background:#cdcdcd"></div>
<div class="abs" style="left:16px;top:946px;width:748px;height:15px;background:#cdcdcd"></div>
<svg class="abs" style="left:4px;top:949px" width="7" height="10" viewBox="0 0 7 10"><path d="M5.5 1l-3.7 3.7 3.7 3.7" stroke="#505050" stroke-width="1.6" fill="none"/></svg>
<svg class="abs" style="left:1839px;top:949px" width="7" height="10" viewBox="0 0 7 10"><path d="M1.5 1l3.7 3.7-3.7 3.7" stroke="#505050" stroke-width="1.6" fill="none"/></svg>
<div class="abs" style="left:1851px;top:945px;width:5px;height:17px;background:#a9a9a9"></div>
<div class="abs" style="left:1853px;top:948px;width:1px;height:10px;background:#000"></div>
<div class="abs" style="left:1873px;top:125px;width:1px;height:853px;background:#a0a0a0"></div>
<div class="abs" style="left:1874px;top:125px;width:5px;height:853px;background:#f0f0f0"></div>
<div class="abs" style="left:1879px;top:125px;width:1px;height:853px;background:#a0a0a0"></div>
<div class="abs" style="left:1873px;top:977px;width:47px;height:1px;background:#a0a0a0"></div>
<div class="abs" style="left:1873px;top:124px;width:47px;height:1px;background:#a8a8a8"></div>
<div class="abs" style="left:1873px;top:515px;width:7px;height:73px;background:#6d6d6d"></div>
<div class="tri" style="left:1874px;top:548px;border-top-width:4px;border-bottom-width:4px;border-left:5px solid #fff"></div>
<svg class="abs" style="left:1893px;top:138px" width="14" height="12" viewBox="0 0 14 12"><path d="M1 1.5h8M1 3.5h8M1 5.5h8" stroke="#1c2a4a" stroke-width="1"/><path d="M5.5 7.5h7l-3.5 3.5z" fill="#1c2a4a"/></svg>
<div class="abs" style="left:1889px;top:163px;width:23px;height:1px;background:#dcdcdc"></div>
<svg class="ic" style="left:1888px;top:171px;" viewBox="0 0 24 24"><g transform="translate(12 12) scale(.86) translate(-12 -12) rotate(-45 12 12)" fill="#f0f0f0" stroke="#a3a3a3" stroke-width="1.100" stroke-linejoin="round"><path d="M10.400 4v16h3.200v-16z"/><path d="M9.700 -3.300v4.300l1.300 1h2l1.300-1v-4.300c2.200.8 3.500 2.700 3.500 4.800 0 2.900-2.400 4.900-5.800 4.900s-5.800-2-5.800-4.900c0-2.100 1.300-4 3.500-4.800z"/><path d="M9.700 -3.300v4.300l1.300 1h2l1.300-1v-4.300c2.200.8 3.500 2.700 3.500 4.800 0 2.900-2.400 4.900-5.800 4.900s-5.800-2-5.800-4.900c0-2.100 1.300-4 3.500-4.800z" transform="rotate(180 12 12)"/><path d="M10.950 6v12h2.100v-12z" stroke="none"/></g></svg>
<svg class="ic" style="left:1887px;top:207px;" viewBox="0 0 24 24"><text x="15" y="19.800" text-anchor="middle" font-family="DejaVu Serif, Liberation Serif, serif" font-weight="bold" font-size="24" fill="#3c3e3c" textLength="18" lengthAdjust="spacingAndGlyphs">T</text><path d="M1.500 23.500v-15l20 15z" fill="#8ed05a" stroke="#57a51c" stroke-width="1.200" stroke-linejoin="round"/><path d="M5 20.500v-5l6.500 5z" fill="#cfeeb4" stroke="#57a51c" stroke-width=".8"/><path d="M4 22.300h14" stroke="#e06a2a" stroke-width=".6" stroke-dasharray=".8 1.200"/></svg>
<svg class="ic" style="left:1888px;top:240px;" viewBox="0 0 24 24"><defs><linearGradient id="sg" x1="0" y1="0" x2="0" y2="1"><stop offset="0" stop-color="#a8682c"/><stop offset=".5" stop-color="#ee9a30"/><stop offset="1" stop-color="#fad650"/></linearGradient></defs><path d="M8 5.500l4-3 4 3" fill="none" stroke="#777" stroke-width="1"/><rect x="1.500" y="5.500" width="21" height="15" rx="1.500" fill="#e9a53a" stroke="#a8690e" stroke-width="1.200"/><rect x="4" y="8" width="16" height="10" fill="url(#sg)"/><circle cx="8.500" cy="16.500" r="2" fill="#fff3a8"/><path d="M14 18v-5M14 14l-2.500-2.500M14 13.500l2.500-3M13 12.500l-.5-2M15.300 12l2-.500" stroke="#1c1208" stroke-width="1" fill="none"/></svg>
<div class="abs" style="left:1884px;top:272px;width:32px;height:32px;border:1px solid #b0b0b0;border-radius:3px;background:#f4f4f4"></div>
<svg class="ic" style="left:1888px;top:276px;" viewBox="0 0 24 24"><circle cx="12" cy="12" r="10" fill="#f7f7f7" stroke="#8d8d8d" stroke-width="1.600"/><circle cx="12" cy="12" r="7.800" fill="#fff" stroke="#c9c9c9" stroke-width=".8"/><path d="M7 6.500l7 4-3.500 3z" fill="#e0242c"/><path d="M17 17.500l-7-4 3.500-3z" fill="#3b6fc0"/></svg>
<svg class="ic" style="left:1888px;top:310px;" viewBox="0 0 24 24"><text x="2.500" y="19.700" font-family="Liberation Serif, serif" font-style="italic" font-weight="bold" font-size="16" fill="#a56bb8" stroke="#6a2f86" stroke-width=".7" textLength="17" lengthAdjust="spacingAndGlyphs">fx</text><path transform="translate(7 8) scale(0.9)" d="M0 -3l.9 2 2.100.2-1.600 1.500.5 2.100-1.900-1.100-1.900 1.100.5-2.100-1.600-1.500 2.100-.2z" fill="#f3d428" stroke="#b8960a" stroke-width=".5"/><path transform="translate(13 4.5) scale(1.05)" d="M0 -3l.9 2 2.100.2-1.600 1.500.5 2.100-1.900-1.100-1.900 1.100.5-2.100-1.600-1.500 2.100-.2z" fill="#f3d428" stroke="#b8960a" stroke-width=".5"/><path transform="translate(20 5) scale(1.25)" d="M0 -3l.9 2 2.100.2-1.600 1.500.5 2.100-1.900-1.100-1.900 1.100.5-2.100-1.600-1.500 2.100-.2z" fill="#f3d428" stroke="#b8960a" stroke-width=".5"/></svg>
<svg class="abs" style="left:8px;top:964px" width="70" height="14" viewBox="0 0 70 14" fill="#a0a0a0"><path d="M4 2h1.5v9H4z M10 2v9L5.5 6.5z"/><path d="M26 2v9l-5-4.5z"/><path d="M38 2v9l5-4.5z"/><path d="M54 2v9l4.5-4.5z M58.5 2H60v9h-1.5z"/></svg>
<svg class="abs" style="left:83px;top:965px" width="11" height="11" viewBox="0 0 11 11"><path d="M5.5 1v9M1 5.5h9" stroke="#000" stroke-width="2"/></svg>
<div class="abs" style="left:103px;top:962px;width:64px;height:17px;background:#fff;border:1px solid #6a6a6a;border-top:none"></div>
<span class="t" style="left:114px;top:962.5px;font-size:12.5px;color:#000;font-weight:bold;letter-spacing:-0.500px;">Sheet1</span>
<div class="abs" style="left:0;top:979px;width:1920px;height:1px;background:#a0a0a0"></div>
<svg class="ic" style="left:16px;top:986px;" viewBox="0 0 24 24"><path d="M6.500 6.500l11 11M17.500 6.500l-11 11" stroke="#555" stroke-width="5" stroke-linecap="round"/><path d="M6.500 6.500l11 11M17.500 6.500l-11 11" stroke="#8d8f8b" stroke-width="3" stroke-linecap="round"/></svg>
<div class="abs" style="left:45px;top:986px;width:250px;height:24px;background:#fff;border:1px solid #ababab"></div>
<div class="abs" style="left:276px;top:988px;width:17px;height:20px;background:#e1e1e1;border:1px solid #adadad"></div>
<svg class="abs" style="left:280px;top:995px" width="9" height="6" viewBox="0 0 9 6"><path d="M0.5 0.8l4 4 4-4" stroke="#444" stroke-width="1.1" fill="none"/></svg>
<span class="t" style="left:49px;top:991px;font-size:12px;color:#8a8a8a;letter-spacing:-0.336px;">Find</span>
<svg class="ic" style="left:298px;top:986px;" viewBox="0 0 24 24"><path d="M4 13l8-8 8 8" fill="none" stroke="#d6d6d6" stroke-width="1.400"/><path d="M8 14l4-4 4 4" fill="none" stroke="#d6d6d6" stroke-width="1.200"/><path d="M10 17.500l2-2 2 2-2 2z" fill="none" stroke="#dcdcdc" stroke-width="1"/></svg>
<svg class="ic" style="left:331px;top:986px;" viewBox="0 0 24 24"><g transform="rotate(180 12 12)"><path d="M4 13l8-8 8 8" fill="none" stroke="#d6d6d6" stroke-width="1.400"/><path d="M8 14l4-4 4 4" fill="none" stroke="#d6d6d6" stroke-width="1.200"/><path d="M10 17.500l2-2 2 2-2 2z" fill="none" stroke="#dcdcdc" stroke-width="1"/></g></svg>
<span class="t" style="left:364px;top:991px;font-size:12px;color:#8c8c8c;letter-spacing:-0.045px;">Find All</span>
<div class="abs" style="left:412px;top:990px;width:13px;height:13px;background:#fff;border:1px solid #333"></div>
<span class="t" style="left:429px;top:990px;font-size:12px;color:#000;letter-spacing:-0.140px;"><u>F</u>ormatted Display</span>
<div class="abs" style="left:527px;top:990px;width:13px;height:13px;background:#fff;border:1px solid #333"></div>
<span class="t" style="left:544px;top:990px;font-size:12px;color:#000;letter-spacing:-0.303px;"><u>M</u>atch Case</span>
<div class="sep" style="left:611px;top:989px"></div>
<svg class="ic" style="left:620px;top:986px;" viewBox="0 0 24 24"><path d="M14 13.500l7 7.500" stroke="#2f2f2f" stroke-width="3.200" stroke-linecap="round"/><circle cx="9.500" cy="9" r="6.700" fill="#f3f3f3" fill-opacity=".9" stroke="#3a50b4" stroke-width="2.700"/><path d="M5.200 19.800l1.300-4.300 11.200-11.700 3.200 3.100-11.300 11.700z" fill="#f28b24" stroke="#8f4a08" stroke-width=".8"/><path d="M7.500 16.500l11-11.500M8.800 17.800l11-11.500" stroke="#f9b870" stroke-width=".7"/><path d="M5.500 19.500l1.300-4 2.700 2.700z" fill="#f3d9b0" stroke="#8f4a08" stroke-width=".6"/><path d="M18 3.800l1.200-1.100c.9-.8 3.400 1.600 2.600 2.600l-1.100 1.200z" fill="#ee3e54"/><path d="M5.500 19.500l.5-1.500 1 1z" fill="#222"/></svg>
<div class="sep" style="left:652px;top:989px"></div>
<div class="abs" style="left:0;top:1018px;width:1920px;height:1px;background:#a0a0a0"></div>
<div class="ssep" style="left:245px"></div>
<div class="ssep" style="left:604px"></div>
<div class="ssep" style="left:870px"></div>
<div class="ssep" style="left:1124px"></div>
<div class="ssep" style="left:1193px"></div>
<div class="ssep" style="left:1223px"></div>
<div class="ssep" style="left:1253px"></div>
<div class="ssep" style="left:1283px"></div>
<div class="ssep" style="left:1729px"></div>
<div class="ssep" style="left:1874px"></div>
<span class="t" style="left:11px;top:1023px;font-size:12px;color:#000;letter-spacing:-0.393px;">Sheet 1 of 1</span>
<span class="t" style="left:614px;top:1023px;font-size:12px;color:#000;letter-spacing:-0.589px;">PageStyle_Sheet1</span>
<span class="t" style="left:963px;top:1023px;font-size:12px;color:#000;letter-spacing:-0.335px;">English (USA)</span>
<span class="t" style="left:1463px;top:1023px;font-size:12px;color:#000;letter-spacing:-0.344px;">Average: ; Sum: 0</span>
<span class="t" style="left:1883px;top:1023px;font-size:12px;color:#000;letter-spacing:-0.926px;">100%</span>
<svg class="abs" style="left:1200px;top:1023px" width="50" height="14" viewBox="0 0 50 14"><rect x="4" y="4" width="9" height="6" fill="#8a8a8a"/><path d="M14.5 3v8M13 3h3M13 11h3" stroke="#666" stroke-width="1" fill="none"/><path d="M43.500 3.300V1.900H35.900V11.600H43.500V10.200" fill="none" stroke="#888" stroke-width="1"/><path d="M43.400 4v5.400M41.100 5.350l4.600 2.700M45.700 5.350l-4.600 2.700" stroke="#c00000" stroke-width="1.100"/></svg>
<svg class="abs" style="left:1736px;top:1023px" width="136" height="14" viewBox="0 0 136 14"><path d="M4 7h8" stroke="#8a8a8a" stroke-width="1.4"/><path d="M18 7h98" stroke="#9a9a9a" stroke-width="1.4"/><circle cx="66" cy="7" r="3.6" fill="#fff" stroke="#7a7a7a" stroke-width="1"/><path d="M122 7h8M126 3v8" stroke="#8a8a8a" stroke-width="1.4"/></svg>
</body></html>
